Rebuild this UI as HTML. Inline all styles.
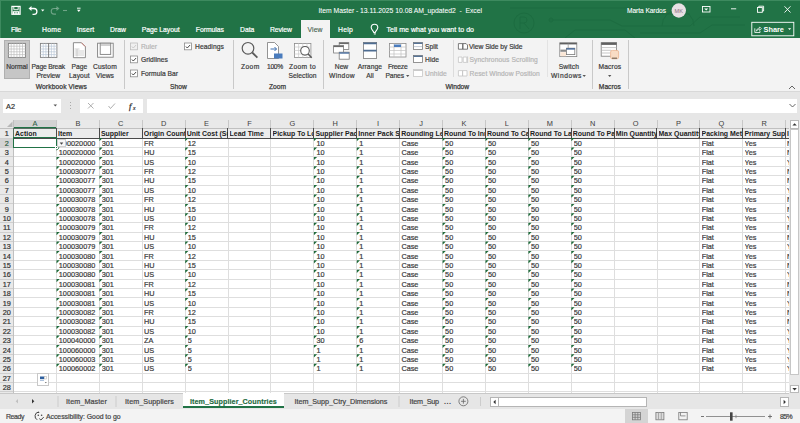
<!DOCTYPE html>
<html><head><meta charset="utf-8"><style>
html,body{margin:0;padding:0;width:800px;height:423px;overflow:hidden;background:#fff;}
body{position:relative;font-family:"Liberation Sans", sans-serif;}
div{box-sizing:border-box;}
svg{overflow:visible}
</style></head><body>
<div style="position:absolute;left:0px;top:0px;width:800px;height:38px;background:#217346"></div>
<div style="position:absolute;left:0px;top:0px;width:800px;height:1px;background:#3d8a5f"></div>
<div style="position:absolute;left:0px;top:0px;width:1px;height:38px;background:#3d8a5f"></div>
<svg style="position:absolute;left:0px;top:0px;" width="800" height="38" viewBox="0 0 800 38"><g fill="none" stroke="#1b6a3f" stroke-width="1" opacity="0.75">
<path d="M510 8 H640 L648 14 H690"/>
<circle cx="524" cy="23" r="10"/>
<path d="M520 17 v12 M520 17 h4 a3 3 0 0 1 0 6 h-4 M524 23 l5 6"/>
<path d="M549 20 H610 L622 26 H690 L700 17 H740"/>
<circle cx="551" cy="20" r="2"/>
<path d="M565 38 L575 30 H625 L635 38"/>
<path d="M640 33 H700 L712 25 H745"/>
<path d="M662 26 a16 16 0 0 1 32 0"/>
</g></svg>
<svg style="position:absolute;left:0px;top:0px;" width="100" height="20" viewBox="0 0 100 20">
<g fill="none" stroke="#fff" stroke-width="1.1">
<rect x="11.9" y="6.4" width="8.2" height="7.9" stroke-width="1.2"/>
<path d="M13.8 6.4 v3.3 h4.4 v-3.3" stroke-width="0.9"/>
<path d="M30.5 8.5 h3.5 a2.9 2.9 0 0 1 0 5.8 h-1.5" stroke-width="1.3"/>
</g>
<path d="M28.5 8.5 l3 -2.6 v5.2 z" fill="#fff"/><rect x="12.6" y="11.2" width="6.8" height="3" fill="#fff"/><rect x="14.2" y="12.3" width="1.2" height="1" fill="#217346"/><rect x="16.6" y="12.3" width="1.2" height="1" fill="#217346"/>
<path d="M41 9.5 h3.4 l-1.7 2 z" fill="#fff"/>
<g fill="none" stroke="#fff" stroke-width="1.1" opacity="0.35">
<path d="M57 8.5 h-3 a2.8 2.8 0 0 0 0 5.6 h2"/>
<path d="M63 10.5 h4"/>
</g>
<path d="M59.5 8.5 l-3 -2.6 v5.2 z" fill="#fff" opacity="0.35"/>
<path d="M77 8.2 h3.6" stroke="#fff" stroke-width="0.9"/>
<path d="M77 9.8 h3.6 l-1.8 2.2 z" fill="#fff"/>
</svg>
<svg style="position:absolute;left:660px;top:0px;" width="140" height="38" viewBox="0 0 140 38">
<circle cx="18.8" cy="10.5" r="7.2" fill="#e7e0e3"/>
<text x="18.8" y="12.6" font-family="Liberation Sans" font-size="5.6" fill="#8a6f7c" text-anchor="middle">MK</text>
<g fill="none" stroke="#fff" stroke-width="0.9">
<rect x="42.5" y="6.5" width="7.5" height="5.5"/>
<path d="M71 8.8 h5.2"/>
<rect x="97.5" y="7.5" width="4.8" height="4.8"/>
<path d="M98.8 7.5 v-1.3 h4.8 v4.8 h-1.3"/>
<path d="M124.5 6.3 l6 6.2 M130.5 6.3 l-6 6.2"/>
<rect x="91.8" y="22.3" width="42" height="13.5" />
<path d="M94.8 28.3 v4.2 h5.2 v-1.6" stroke-width="0.8"/><path d="M96.4 31.2 c0.2 -2 1.4 -3 3.2 -3 v-1.3 l1.8 1.8 l-1.8 1.8 v-1.2 c-1.4 0 -2.4 0.5 -3.2 1.9 z" stroke-width="0.7"/>
</g>
<path d="M44.2 8.5 h4 l-2 2 z" fill="#fff"/>
<path d="M128 28.2 h3.2 l-1.6 1.8 z" fill="#fff"/>
</svg>
<div style="position:absolute;left:300.6px;top:20.3px;width:29.6px;height:18px;background:#f3f3f3"></div>
<svg style="position:absolute;left:365px;top:20px;" width="20" height="18" viewBox="0 0 20 18"><g fill="none" stroke="#fff" stroke-width="1.1">
<path d="M8.8 12.5 c0 -1.6 -2.6 -2.6 -2.6 -5 a3.3 3.3 0 0 1 6.6 0 c0 2.4 -2.6 3.4 -2.6 5 z"/>
<path d="M8.8 13.9 h2"/></g></svg>
<div style="position:absolute;left:0px;top:38px;width:800px;height:53px;background:#f3f3f3"></div>
<div style="position:absolute;left:0px;top:90.6px;width:800px;height:0.9px;background:#d8d8d8"></div>
<div style="position:absolute;left:0px;top:91.5px;width:800px;height:28px;background:#e6e6e6"></div>
<div style="position:absolute;left:123.6px;top:40px;width:1px;height:48.5px;background:#c9c9c9"></div>
<div style="position:absolute;left:232.6px;top:40px;width:1px;height:48.5px;background:#c9c9c9"></div>
<div style="position:absolute;left:322.7px;top:40px;width:1px;height:48.5px;background:#c9c9c9"></div>
<div style="position:absolute;left:592.4px;top:40px;width:1px;height:48.5px;background:#c9c9c9"></div>
<div style="position:absolute;left:627.5px;top:40px;width:1px;height:48.5px;background:#c9c9c9"></div>
<div style="position:absolute;left:453.3px;top:40px;width:1px;height:37px;background:#dcdcdc"></div>
<div style="position:absolute;left:546.7px;top:40px;width:1px;height:37px;background:#e3e3e3"></div>
<div style="position:absolute;left:4px;top:39.5px;width:26px;height:39.5px;background:#c6c6c6;border:1px solid #b0b0b0"></div>
<svg style="position:absolute;left:0px;top:38px;" width="140" height="24" viewBox="0 0 140 24">
<g fill="none" stroke-width="0.7">
<rect x="8.4" y="5.4" width="17" height="14" fill="#fff" stroke="#808080" stroke-width="0.9"/>
<path d="M8.4 8.2 h17 M8.4 11 h17 M8.4 13.8 h17 M8.4 16.6 h17 M11.2 5.4 v14 M14 5.4 v14 M16.9 5.4 v14 M19.7 5.4 v14 M22.5 5.4 v14" stroke="#bdbdbd"/>
<rect x="40.4" y="5.4" width="16.5" height="14" fill="#fff" stroke="#808080" stroke-width="0.9"/>
<path d="M40.4 8.2 h16.5 M40.4 11 h16.5 M40.4 13.8 h16.5 M40.4 16.6 h16.5 M43.2 5.4 v14 M45.9 5.4 v14 M51.4 5.4 v14 M54.1 5.4 v14" stroke="#b9c6d6"/>
<path d="M48.6 5.4 v14" stroke="#707070" stroke-width="0.9"/>
<path d="M73.4 4.7 h8 l4 4 v11 h-12 z" fill="#fff" stroke="#808080" stroke-width="0.9"/>
<path d="M81.4 4.7 l4 4" stroke="#c97a70" stroke-width="0.9"/>
<path d="M74.5 11 h5 M74.5 13 h9.5 M74.5 15 h9.5 M74.5 17 h9.5 M77 11 v7.5" stroke="#bdbdbd"/>
<rect x="97.6" y="5.2" width="15.6" height="14" fill="#fff" stroke="#808080" stroke-width="0.9"/>
<rect x="100.2" y="5.2" width="10.5" height="11.2" fill="#fff" stroke="#808080" stroke-width="0.9"/>
<path d="M100.2 7 h10.5" stroke="#9a9a9a" stroke-width="0.9"/>
</g></svg>
<svg style="position:absolute;left:120px;top:38px;" width="120" height="45" viewBox="0 0 120 45">
<g fill="#fff" stroke-width="0.8">
<rect x="10.4" y="5" width="7" height="6.8" stroke="#bdbdbd" fill="#f0f0f0"/>
<rect x="10.4" y="18" width="7" height="6.8" stroke="#8a8a8a"/>
<rect x="10.4" y="32" width="7" height="6.8" stroke="#8a8a8a"/>
<rect x="64.4" y="5" width="7" height="6.8" stroke="#8a8a8a"/>
</g>
<g fill="none" stroke-width="0.9">
<path d="M11.9 8.5 l1.4 1.5 l2.8 -3" stroke="#c4c4c4"/>
<path d="M11.9 21.5 l1.4 1.5 l2.8 -3" stroke="#333"/>
<path d="M11.9 35.5 l1.4 1.5 l2.8 -3" stroke="#333"/>
<path d="M65.9 8.5 l1.4 1.5 l2.8 -3" stroke="#333"/>
</g></svg>
<svg style="position:absolute;left:230px;top:38px;" width="100" height="25" viewBox="0 0 100 25">
<g fill="none">
<circle cx="18" cy="10.3" r="5.8" stroke="#5a5a5a" stroke-width="1.2"/>
<path d="M22.2 14.5 l5.2 5.2" stroke="#5a5a5a" stroke-width="1.8"/>
<path d="M37.5 4.5 h7 l4 4 v12 h-11 z" fill="#fff" stroke="#7a7a7a" stroke-width="0.8"/>
<path d="M40.5 11 h6 M44.5 9 l2 2 l-2 2" stroke="#3d6fb0" stroke-width="1"/>
<rect x="44" y="15.5" width="8.5" height="5" fill="#4a7cbd"/>
<rect x="64.4" y="5.4" width="16.5" height="14" fill="#fff" stroke="#8a8a8a" stroke-width="0.8"/>
<path d="M64.4 9 h16.5 M64.4 12.5 h16.5 M64.4 16 h16.5 M68.6 5.4 v14 M72.8 5.4 v14 M77 5.4 v14" stroke="#c8c8c8" stroke-width="0.7"/>
<circle cx="75" cy="12.8" r="4.3" fill="#fff" stroke="#5a5a5a" stroke-width="1.1"/>
<path d="M78.1 15.9 l3.6 3.8" stroke="#5a5a5a" stroke-width="1.5"/>
</g></svg>
<svg style="position:absolute;left:325px;top:38px;" width="300" height="25" viewBox="0 0 300 25">
<g stroke-width="0.8">
<rect x="14.2" y="4.6" width="9.6" height="6.8" fill="#fff" stroke="#7a7a7a"/>
<path d="M14.2 5.4 h9.6" stroke="#6a6a6a" stroke-width="1.4"/>
<rect x="8.6" y="7.6" width="10" height="7.4" fill="#fff" stroke="#7a7a7a"/>
<path d="M8.6 8.4 h10" stroke="#6a6a6a" stroke-width="1.4"/>
<rect x="14.2" y="14.2" width="10" height="7" fill="#fff" stroke="#7a7a7a"/>
<path d="M14.2 15 h10" stroke="#4a6fa0" stroke-width="1.4"/>
<rect x="38.4" y="4.5" width="13.2" height="16" fill="#fff" stroke="#7a7a7a"/>
<path d="M38.4 5.4 h13.2 M38.4 12.6 h13.2" stroke="#4e6d92" stroke-width="1.9"/>
<rect x="64.5" y="5.5" width="16.5" height="13.5" fill="#fff" stroke="#8a8a8a"/>
<path d="M64.5 9 h16.5 M64.5 12.5 h16.5 M64.5 16 h16.5 M69 5.5 v13.5 M76 5.5 v13.5" stroke="#c0c0c0" stroke-width="0.7"/>
<rect x="69" y="6.5" width="7" height="2.5" fill="#4a7cbd"/>
<rect x="88.5" y="4.5" width="9" height="7" fill="#fff" stroke="#7a7a7a"/>
<path d="M88.5 5.3 h9" stroke="#4e6d92" stroke-width="1.3"/>
<path d="M88.5 8.6 h9" stroke="#9aa8ba" stroke-width="0.6"/>
<rect x="88.5" y="17.5" width="9" height="7" fill="#fff" stroke="#7a7a7a"/>
<path d="M88.5 18.3 h9" stroke="#4e6d92" stroke-width="1.3"/>
<rect x="88.5" y="31.5" width="9" height="7" fill="#fff" stroke="#c8c8c8"/>
<path d="M88.5 32.3 h9" stroke="#c8c8c8" stroke-width="1.3"/>
</g></svg>
<svg style="position:absolute;left:404px;top:73px;" width="8" height="6" viewBox="0 0 8 6"><path d="M2 2 h3.4 l-1.7 2 z" fill="#555"/></svg>
<svg style="position:absolute;left:455px;top:38px;" width="20" height="45" viewBox="0 0 20 45">
<g fill="#fff" stroke-width="0.8">
<path d="M3.4 5.6 h4.4 v5.6 h-4.4 z M7.8 5.6 h3.3 l1.4 1.4 v4.2 h-4.7 z" stroke="#5a5a5a"/>
<path d="M3.4 19 h3.6 v5.4 h-3.6 z M8.2 19 h3.6 v5.4 h-3.6 z" stroke="#c4c4c4"/>
<path d="M12.6 18.4 v6.6" stroke="#c4c4c4"/>
<path d="M3.4 32.6 h4.2 v5.4 h-4.2 z M7.6 32.6 h4.4 v5.4 h-4.4 z" stroke="#c4c4c4"/>
</g></svg>
<svg style="position:absolute;left:550px;top:38px;" width="80" height="25" viewBox="0 0 80 25">
<g stroke-width="0.8">
<rect x="9.8" y="4.8" width="17" height="13.8" fill="#fff" stroke="#808080"/>
<path d="M9.8 5.6 h17" stroke="#606060" stroke-width="1.6"/>
<path d="M18.2 5.6 v5" stroke="#9a9a9a"/>
<rect x="10.4" y="11.6" width="5.8" height="2.2" fill="#8a8a8a" stroke="none"/>
<rect x="10.4" y="14.2" width="5.8" height="4" fill="#fbe7d6" stroke="none"/>
<rect x="16.4" y="10.2" width="8.4" height="6.4" fill="#fff" stroke="#7a7a7a"/>
<path d="M16.4 10.9 h8.4" stroke="#3f6496" stroke-width="1.4"/>
<rect x="51.2" y="4.6" width="15.4" height="13.6" fill="#fff" stroke="#7a7a7a"/>
<path d="M51.2 5.8 h15.4" stroke="#606060" stroke-width="2.2"/>
<path d="M51.2 9.6 h15.4 M51.2 12.3 h10 M51.2 15 h9" stroke="#b0b0b0" stroke-width="0.7"/>
<rect x="60.6" y="12.4" width="8" height="8.4" rx="1.6" fill="#f9dcc4" stroke="#eab48f"/>
<rect x="62" y="19.6" width="5" height="1.2" fill="#7a6a5a" stroke="none"/>
</g></svg>
<svg style="position:absolute;left:581px;top:73px;" width="8" height="6" viewBox="0 0 8 6"><path d="M1.5 2 h3.4 l-1.7 2 z" fill="#555"/></svg>
<svg style="position:absolute;left:606px;top:73px;" width="8" height="6" viewBox="0 0 8 6"><path d="M2 2 h3.4 l-1.7 2 z" fill="#555"/></svg>
<svg style="position:absolute;left:786px;top:84px;" width="12" height="8" viewBox="0 0 12 8"><path d="M3 5 l3 -3 l3 3" fill="none" stroke="#555" stroke-width="0.9"/></svg>
<div style="position:absolute;left:3px;top:99px;width:58px;height:14px;background:#fff"></div>
<svg style="position:absolute;left:50px;top:100px;" width="10" height="10" viewBox="0 0 10 10"><path d="M3.5 4.5 h3.6 l-1.8 2 z" fill="#555"/></svg>
<svg style="position:absolute;left:68px;top:99px;" width="6" height="14" viewBox="0 0 6 14"><g fill="#aaa"><rect x="2" y="3" width="1" height="1"/><rect x="2" y="6" width="1" height="1"/><rect x="2" y="9" width="1" height="1"/></g></svg>
<div style="position:absolute;left:80px;top:99px;width:63px;height:14px;background:#fff"></div>
<svg style="position:absolute;left:80px;top:99px;" width="63" height="14" viewBox="0 0 63 14"><g fill="none" stroke="#9a9a9a" stroke-width="0.8">
<path d="M8 4 l5.5 5.5 M13.5 4 l-5.5 5.5"/>
<path d="M28.5 7 l2 2.5 l4.5 -5"/></g>
<text x="49" y="10.2" font-family="Liberation Serif" font-style="italic" font-size="8.5" fill="#333" stroke="#333" stroke-width="0.3">f</text>
<text x="53" y="10.8" font-family="Liberation Sans" font-style="italic" font-size="5" fill="#333" stroke="#333" stroke-width="0.2">x</text></svg>
<div style="position:absolute;left:147px;top:99px;width:650px;height:14px;background:#fff"></div>
<svg style="position:absolute;left:786px;top:100px;" width="12" height="12" viewBox="0 0 12 12"><path d="M3.5 4 l3 3 l3 -3" fill="none" stroke="#555" stroke-width="0.9"/></svg>
<div style="position:absolute;left:0px;top:119.5px;width:788.8px;height:273.5px;background:#fff"></div>
<div style="position:absolute;left:0px;top:119.5px;width:788.8px;height:8.5px;background:#e9e9e9"></div>
<div style="position:absolute;left:0px;top:128px;width:13.5px;height:265.0px;background:#e9e9e9"></div>
<div style="position:absolute;left:13.5px;top:119.5px;width:42.9px;height:8.5px;background:#d3d3d3"></div>
<div style="position:absolute;left:0px;top:138.0px;width:13.5px;height:9.4px;background:#d3d3d3"></div>
<div style="position:absolute;left:13.5px;top:128.0px;width:775.3px;height:10px;background:#ececec"></div>
<div style="position:absolute;left:55.9px;top:138.0px;width:1px;height:255.0px;background:#dedede"></div>
<div style="position:absolute;left:98.8px;top:138.0px;width:1px;height:255.0px;background:#dedede"></div>
<div style="position:absolute;left:141.7px;top:138.0px;width:1px;height:255.0px;background:#dedede"></div>
<div style="position:absolute;left:184.6px;top:138.0px;width:1px;height:255.0px;background:#dedede"></div>
<div style="position:absolute;left:227.5px;top:138.0px;width:1px;height:255.0px;background:#dedede"></div>
<div style="position:absolute;left:270.4px;top:138.0px;width:1px;height:255.0px;background:#dedede"></div>
<div style="position:absolute;left:313.3px;top:138.0px;width:1px;height:255.0px;background:#dedede"></div>
<div style="position:absolute;left:356.2px;top:138.0px;width:1px;height:255.0px;background:#dedede"></div>
<div style="position:absolute;left:399.09999999999997px;top:138.0px;width:1px;height:255.0px;background:#dedede"></div>
<div style="position:absolute;left:442.0px;top:138.0px;width:1px;height:255.0px;background:#dedede"></div>
<div style="position:absolute;left:484.9px;top:138.0px;width:1px;height:255.0px;background:#dedede"></div>
<div style="position:absolute;left:527.8px;top:138.0px;width:1px;height:255.0px;background:#dedede"></div>
<div style="position:absolute;left:570.6999999999999px;top:138.0px;width:1px;height:255.0px;background:#dedede"></div>
<div style="position:absolute;left:613.6px;top:138.0px;width:1px;height:255.0px;background:#dedede"></div>
<div style="position:absolute;left:656.5px;top:138.0px;width:1px;height:255.0px;background:#dedede"></div>
<div style="position:absolute;left:699.4px;top:138.0px;width:1px;height:255.0px;background:#dedede"></div>
<div style="position:absolute;left:742.3px;top:138.0px;width:1px;height:255.0px;background:#dedede"></div>
<div style="position:absolute;left:785.1999999999999px;top:138.0px;width:1px;height:255.0px;background:#dedede"></div>
<div style="position:absolute;left:13.5px;top:137.5px;width:775.3px;height:1px;background:#dedede"></div>
<div style="position:absolute;left:13.5px;top:146.9px;width:775.3px;height:1px;background:#dedede"></div>
<div style="position:absolute;left:13.5px;top:156.3px;width:775.3px;height:1px;background:#dedede"></div>
<div style="position:absolute;left:13.5px;top:165.7px;width:775.3px;height:1px;background:#dedede"></div>
<div style="position:absolute;left:13.5px;top:175.1px;width:775.3px;height:1px;background:#dedede"></div>
<div style="position:absolute;left:13.5px;top:184.5px;width:775.3px;height:1px;background:#dedede"></div>
<div style="position:absolute;left:13.5px;top:193.9px;width:775.3px;height:1px;background:#dedede"></div>
<div style="position:absolute;left:13.5px;top:203.3px;width:775.3px;height:1px;background:#dedede"></div>
<div style="position:absolute;left:13.5px;top:212.7px;width:775.3px;height:1px;background:#dedede"></div>
<div style="position:absolute;left:13.5px;top:222.10000000000002px;width:775.3px;height:1px;background:#dedede"></div>
<div style="position:absolute;left:13.5px;top:231.5px;width:775.3px;height:1px;background:#dedede"></div>
<div style="position:absolute;left:13.5px;top:240.9px;width:775.3px;height:1px;background:#dedede"></div>
<div style="position:absolute;left:13.5px;top:250.3px;width:775.3px;height:1px;background:#dedede"></div>
<div style="position:absolute;left:13.5px;top:259.7px;width:775.3px;height:1px;background:#dedede"></div>
<div style="position:absolute;left:13.5px;top:269.1px;width:775.3px;height:1px;background:#dedede"></div>
<div style="position:absolute;left:13.5px;top:278.5px;width:775.3px;height:1px;background:#dedede"></div>
<div style="position:absolute;left:13.5px;top:287.9px;width:775.3px;height:1px;background:#dedede"></div>
<div style="position:absolute;left:13.5px;top:297.3px;width:775.3px;height:1px;background:#dedede"></div>
<div style="position:absolute;left:13.5px;top:306.70000000000005px;width:775.3px;height:1px;background:#dedede"></div>
<div style="position:absolute;left:13.5px;top:316.1px;width:775.3px;height:1px;background:#dedede"></div>
<div style="position:absolute;left:13.5px;top:325.5px;width:775.3px;height:1px;background:#dedede"></div>
<div style="position:absolute;left:13.5px;top:334.9px;width:775.3px;height:1px;background:#dedede"></div>
<div style="position:absolute;left:13.5px;top:344.3px;width:775.3px;height:1px;background:#dedede"></div>
<div style="position:absolute;left:13.5px;top:353.70000000000005px;width:775.3px;height:1px;background:#dedede"></div>
<div style="position:absolute;left:13.5px;top:363.1px;width:775.3px;height:1px;background:#dedede"></div>
<div style="position:absolute;left:13.5px;top:372.5px;width:775.3px;height:1px;background:#dedede"></div>
<div style="position:absolute;left:13.5px;top:381.9px;width:775.3px;height:1px;background:#dedede"></div>
<div style="position:absolute;left:13.5px;top:391.3px;width:775.3px;height:1px;background:#dedede"></div>
<div style="position:absolute;left:13.0px;top:119.5px;width:1px;height:8.5px;background:#c8c8c8"></div>
<div style="position:absolute;left:55.9px;top:119.5px;width:1px;height:8.5px;background:#c8c8c8"></div>
<div style="position:absolute;left:98.8px;top:119.5px;width:1px;height:8.5px;background:#c8c8c8"></div>
<div style="position:absolute;left:141.7px;top:119.5px;width:1px;height:8.5px;background:#c8c8c8"></div>
<div style="position:absolute;left:184.6px;top:119.5px;width:1px;height:8.5px;background:#c8c8c8"></div>
<div style="position:absolute;left:227.5px;top:119.5px;width:1px;height:8.5px;background:#c8c8c8"></div>
<div style="position:absolute;left:270.4px;top:119.5px;width:1px;height:8.5px;background:#c8c8c8"></div>
<div style="position:absolute;left:313.3px;top:119.5px;width:1px;height:8.5px;background:#c8c8c8"></div>
<div style="position:absolute;left:356.2px;top:119.5px;width:1px;height:8.5px;background:#c8c8c8"></div>
<div style="position:absolute;left:399.09999999999997px;top:119.5px;width:1px;height:8.5px;background:#c8c8c8"></div>
<div style="position:absolute;left:442.0px;top:119.5px;width:1px;height:8.5px;background:#c8c8c8"></div>
<div style="position:absolute;left:484.9px;top:119.5px;width:1px;height:8.5px;background:#c8c8c8"></div>
<div style="position:absolute;left:527.8px;top:119.5px;width:1px;height:8.5px;background:#c8c8c8"></div>
<div style="position:absolute;left:570.6999999999999px;top:119.5px;width:1px;height:8.5px;background:#c8c8c8"></div>
<div style="position:absolute;left:613.6px;top:119.5px;width:1px;height:8.5px;background:#c8c8c8"></div>
<div style="position:absolute;left:656.5px;top:119.5px;width:1px;height:8.5px;background:#c8c8c8"></div>
<div style="position:absolute;left:699.4px;top:119.5px;width:1px;height:8.5px;background:#c8c8c8"></div>
<div style="position:absolute;left:742.3px;top:119.5px;width:1px;height:8.5px;background:#c8c8c8"></div>
<div style="position:absolute;left:785.1999999999999px;top:119.5px;width:1px;height:8.5px;background:#c8c8c8"></div>
<div style="position:absolute;left:0px;top:137.5px;width:13.5px;height:1px;background:#cfcfcf"></div>
<div style="position:absolute;left:0px;top:146.9px;width:13.5px;height:1px;background:#cfcfcf"></div>
<div style="position:absolute;left:0px;top:156.3px;width:13.5px;height:1px;background:#cfcfcf"></div>
<div style="position:absolute;left:0px;top:165.7px;width:13.5px;height:1px;background:#cfcfcf"></div>
<div style="position:absolute;left:0px;top:175.1px;width:13.5px;height:1px;background:#cfcfcf"></div>
<div style="position:absolute;left:0px;top:184.5px;width:13.5px;height:1px;background:#cfcfcf"></div>
<div style="position:absolute;left:0px;top:193.9px;width:13.5px;height:1px;background:#cfcfcf"></div>
<div style="position:absolute;left:0px;top:203.3px;width:13.5px;height:1px;background:#cfcfcf"></div>
<div style="position:absolute;left:0px;top:212.7px;width:13.5px;height:1px;background:#cfcfcf"></div>
<div style="position:absolute;left:0px;top:222.10000000000002px;width:13.5px;height:1px;background:#cfcfcf"></div>
<div style="position:absolute;left:0px;top:231.5px;width:13.5px;height:1px;background:#cfcfcf"></div>
<div style="position:absolute;left:0px;top:240.9px;width:13.5px;height:1px;background:#cfcfcf"></div>
<div style="position:absolute;left:0px;top:250.3px;width:13.5px;height:1px;background:#cfcfcf"></div>
<div style="position:absolute;left:0px;top:259.7px;width:13.5px;height:1px;background:#cfcfcf"></div>
<div style="position:absolute;left:0px;top:269.1px;width:13.5px;height:1px;background:#cfcfcf"></div>
<div style="position:absolute;left:0px;top:278.5px;width:13.5px;height:1px;background:#cfcfcf"></div>
<div style="position:absolute;left:0px;top:287.9px;width:13.5px;height:1px;background:#cfcfcf"></div>
<div style="position:absolute;left:0px;top:297.3px;width:13.5px;height:1px;background:#cfcfcf"></div>
<div style="position:absolute;left:0px;top:306.70000000000005px;width:13.5px;height:1px;background:#cfcfcf"></div>
<div style="position:absolute;left:0px;top:316.1px;width:13.5px;height:1px;background:#cfcfcf"></div>
<div style="position:absolute;left:0px;top:325.5px;width:13.5px;height:1px;background:#cfcfcf"></div>
<div style="position:absolute;left:0px;top:334.9px;width:13.5px;height:1px;background:#cfcfcf"></div>
<div style="position:absolute;left:0px;top:344.3px;width:13.5px;height:1px;background:#cfcfcf"></div>
<div style="position:absolute;left:0px;top:353.70000000000005px;width:13.5px;height:1px;background:#cfcfcf"></div>
<div style="position:absolute;left:0px;top:363.1px;width:13.5px;height:1px;background:#cfcfcf"></div>
<div style="position:absolute;left:0px;top:372.5px;width:13.5px;height:1px;background:#cfcfcf"></div>
<div style="position:absolute;left:0px;top:381.9px;width:13.5px;height:1px;background:#cfcfcf"></div>
<div style="position:absolute;left:0px;top:391.3px;width:13.5px;height:1px;background:#cfcfcf"></div>
<div style="position:absolute;left:0px;top:127.5px;width:788.8px;height:1px;background:#c0c0c0"></div>
<div style="position:absolute;left:13.0px;top:119.5px;width:1px;height:273.5px;background:#c0c0c0"></div>
<div style="position:absolute;left:13.5px;top:137.5px;width:775.3px;height:1px;background:#4a4a4a"></div>
<div style="position:absolute;left:55.8px;top:128.0px;width:1px;height:10px;background:#4a4a4a"></div>
<div style="position:absolute;left:98.7px;top:128.0px;width:1px;height:10px;background:#4a4a4a"></div>
<div style="position:absolute;left:141.6px;top:128.0px;width:1px;height:10px;background:#4a4a4a"></div>
<div style="position:absolute;left:184.5px;top:128.0px;width:1px;height:10px;background:#4a4a4a"></div>
<div style="position:absolute;left:227.4px;top:128.0px;width:1px;height:10px;background:#4a4a4a"></div>
<div style="position:absolute;left:270.29999999999995px;top:128.0px;width:1px;height:10px;background:#4a4a4a"></div>
<div style="position:absolute;left:313.2px;top:128.0px;width:1px;height:10px;background:#4a4a4a"></div>
<div style="position:absolute;left:356.09999999999997px;top:128.0px;width:1px;height:10px;background:#4a4a4a"></div>
<div style="position:absolute;left:398.99999999999994px;top:128.0px;width:1px;height:10px;background:#4a4a4a"></div>
<div style="position:absolute;left:441.9px;top:128.0px;width:1px;height:10px;background:#4a4a4a"></div>
<div style="position:absolute;left:484.79999999999995px;top:128.0px;width:1px;height:10px;background:#4a4a4a"></div>
<div style="position:absolute;left:527.6999999999999px;top:128.0px;width:1px;height:10px;background:#4a4a4a"></div>
<div style="position:absolute;left:570.5999999999999px;top:128.0px;width:1px;height:10px;background:#4a4a4a"></div>
<div style="position:absolute;left:613.5px;top:128.0px;width:1px;height:10px;background:#4a4a4a"></div>
<div style="position:absolute;left:656.4px;top:128.0px;width:1px;height:10px;background:#4a4a4a"></div>
<div style="position:absolute;left:699.3px;top:128.0px;width:1px;height:10px;background:#4a4a4a"></div>
<div style="position:absolute;left:742.1999999999999px;top:128.0px;width:1px;height:10px;background:#4a4a4a"></div>
<div style="position:absolute;left:785.0999999999999px;top:128.0px;width:1px;height:10px;background:#4a4a4a"></div>
<div style="position:absolute;left:13.3px;top:128.0px;width:1px;height:10px;background:#5a6e62"></div>
<div style="position:absolute;left:13.5px;top:127.7px;width:42.9px;height:1px;background:#5a6e62"></div>
<div style="position:absolute;left:13.5px;top:127.2px;width:42.9px;height:1.2px;background:#217346"></div>
<div style="position:absolute;left:12.5px;top:138.0px;width:1.2px;height:9.4px;background:#217346"></div>
<svg style="position:absolute;left:0px;top:119px;" width="14" height="10" viewBox="0 0 14 10"><path d="M12.5 2.5 v5.5 h-5.5 z" fill="#b8b8b8"/></svg>
<div style="position:absolute;left:788.8px;top:119.5px;width:11.200000000000045px;height:273.5px;background:#e9e9e9"></div>
<div style="position:absolute;left:790.2px;top:120.3px;width:8.4px;height:8.6px;background:#fff;border:1px solid #b9b9b9"></div>
<svg style="position:absolute;left:790px;top:120px;" width="10" height="10" viewBox="0 0 10 10"><path d="M2.4 5.6 h4.4 l-2.2 -2.4 z" fill="#333"/></svg>
<div style="position:absolute;left:790.2px;top:129.2px;width:8.4px;height:245.5px;background:#fff;border:1px solid #c6c6c6"></div>
<div style="position:absolute;left:790.2px;top:385.2px;width:8.4px;height:8px;background:#fff;border:1px solid #b9b9b9"></div>
<svg style="position:absolute;left:790px;top:385px;" width="10" height="10" viewBox="0 0 10 10"><path d="M2.4 3 h4.4 l-2.2 2.4 z" fill="#333"/></svg>
<svg style="position:absolute;left:0px;top:0px;z-index:5" width="800" height="423" viewBox="0 0 800 423"><path d="M99.40 138.10 h3.2 l-3.2 3.2 z M185.20 138.10 h3.2 l-3.2 3.2 z M313.90 138.10 h3.2 l-3.2 3.2 z M356.80 138.10 h3.2 l-3.2 3.2 z M442.60 138.10 h3.2 l-3.2 3.2 z M485.50 138.10 h3.2 l-3.2 3.2 z M528.40 138.10 h3.2 l-3.2 3.2 z M571.30 138.10 h3.2 l-3.2 3.2 z M56.50 147.50 h3.2 l-3.2 3.2 z M99.40 147.50 h3.2 l-3.2 3.2 z M185.20 147.50 h3.2 l-3.2 3.2 z M313.90 147.50 h3.2 l-3.2 3.2 z M356.80 147.50 h3.2 l-3.2 3.2 z M442.60 147.50 h3.2 l-3.2 3.2 z M485.50 147.50 h3.2 l-3.2 3.2 z M528.40 147.50 h3.2 l-3.2 3.2 z M571.30 147.50 h3.2 l-3.2 3.2 z M56.50 156.90 h3.2 l-3.2 3.2 z M99.40 156.90 h3.2 l-3.2 3.2 z M185.20 156.90 h3.2 l-3.2 3.2 z M313.90 156.90 h3.2 l-3.2 3.2 z M356.80 156.90 h3.2 l-3.2 3.2 z M442.60 156.90 h3.2 l-3.2 3.2 z M485.50 156.90 h3.2 l-3.2 3.2 z M528.40 156.90 h3.2 l-3.2 3.2 z M571.30 156.90 h3.2 l-3.2 3.2 z M56.50 166.30 h3.2 l-3.2 3.2 z M99.40 166.30 h3.2 l-3.2 3.2 z M185.20 166.30 h3.2 l-3.2 3.2 z M313.90 166.30 h3.2 l-3.2 3.2 z M356.80 166.30 h3.2 l-3.2 3.2 z M442.60 166.30 h3.2 l-3.2 3.2 z M485.50 166.30 h3.2 l-3.2 3.2 z M528.40 166.30 h3.2 l-3.2 3.2 z M571.30 166.30 h3.2 l-3.2 3.2 z M56.50 175.70 h3.2 l-3.2 3.2 z M99.40 175.70 h3.2 l-3.2 3.2 z M185.20 175.70 h3.2 l-3.2 3.2 z M313.90 175.70 h3.2 l-3.2 3.2 z M356.80 175.70 h3.2 l-3.2 3.2 z M442.60 175.70 h3.2 l-3.2 3.2 z M485.50 175.70 h3.2 l-3.2 3.2 z M528.40 175.70 h3.2 l-3.2 3.2 z M571.30 175.70 h3.2 l-3.2 3.2 z M56.50 185.10 h3.2 l-3.2 3.2 z M99.40 185.10 h3.2 l-3.2 3.2 z M185.20 185.10 h3.2 l-3.2 3.2 z M313.90 185.10 h3.2 l-3.2 3.2 z M356.80 185.10 h3.2 l-3.2 3.2 z M442.60 185.10 h3.2 l-3.2 3.2 z M485.50 185.10 h3.2 l-3.2 3.2 z M528.40 185.10 h3.2 l-3.2 3.2 z M571.30 185.10 h3.2 l-3.2 3.2 z M56.50 194.50 h3.2 l-3.2 3.2 z M99.40 194.50 h3.2 l-3.2 3.2 z M185.20 194.50 h3.2 l-3.2 3.2 z M313.90 194.50 h3.2 l-3.2 3.2 z M356.80 194.50 h3.2 l-3.2 3.2 z M442.60 194.50 h3.2 l-3.2 3.2 z M485.50 194.50 h3.2 l-3.2 3.2 z M528.40 194.50 h3.2 l-3.2 3.2 z M571.30 194.50 h3.2 l-3.2 3.2 z M56.50 203.90 h3.2 l-3.2 3.2 z M99.40 203.90 h3.2 l-3.2 3.2 z M185.20 203.90 h3.2 l-3.2 3.2 z M313.90 203.90 h3.2 l-3.2 3.2 z M356.80 203.90 h3.2 l-3.2 3.2 z M442.60 203.90 h3.2 l-3.2 3.2 z M485.50 203.90 h3.2 l-3.2 3.2 z M528.40 203.90 h3.2 l-3.2 3.2 z M571.30 203.90 h3.2 l-3.2 3.2 z M56.50 213.30 h3.2 l-3.2 3.2 z M99.40 213.30 h3.2 l-3.2 3.2 z M185.20 213.30 h3.2 l-3.2 3.2 z M313.90 213.30 h3.2 l-3.2 3.2 z M356.80 213.30 h3.2 l-3.2 3.2 z M442.60 213.30 h3.2 l-3.2 3.2 z M485.50 213.30 h3.2 l-3.2 3.2 z M528.40 213.30 h3.2 l-3.2 3.2 z M571.30 213.30 h3.2 l-3.2 3.2 z M56.50 222.70 h3.2 l-3.2 3.2 z M99.40 222.70 h3.2 l-3.2 3.2 z M185.20 222.70 h3.2 l-3.2 3.2 z M313.90 222.70 h3.2 l-3.2 3.2 z M356.80 222.70 h3.2 l-3.2 3.2 z M442.60 222.70 h3.2 l-3.2 3.2 z M485.50 222.70 h3.2 l-3.2 3.2 z M528.40 222.70 h3.2 l-3.2 3.2 z M571.30 222.70 h3.2 l-3.2 3.2 z M56.50 232.10 h3.2 l-3.2 3.2 z M99.40 232.10 h3.2 l-3.2 3.2 z M185.20 232.10 h3.2 l-3.2 3.2 z M313.90 232.10 h3.2 l-3.2 3.2 z M356.80 232.10 h3.2 l-3.2 3.2 z M442.60 232.10 h3.2 l-3.2 3.2 z M485.50 232.10 h3.2 l-3.2 3.2 z M528.40 232.10 h3.2 l-3.2 3.2 z M571.30 232.10 h3.2 l-3.2 3.2 z M56.50 241.50 h3.2 l-3.2 3.2 z M99.40 241.50 h3.2 l-3.2 3.2 z M185.20 241.50 h3.2 l-3.2 3.2 z M313.90 241.50 h3.2 l-3.2 3.2 z M356.80 241.50 h3.2 l-3.2 3.2 z M442.60 241.50 h3.2 l-3.2 3.2 z M485.50 241.50 h3.2 l-3.2 3.2 z M528.40 241.50 h3.2 l-3.2 3.2 z M571.30 241.50 h3.2 l-3.2 3.2 z M56.50 250.90 h3.2 l-3.2 3.2 z M99.40 250.90 h3.2 l-3.2 3.2 z M185.20 250.90 h3.2 l-3.2 3.2 z M313.90 250.90 h3.2 l-3.2 3.2 z M356.80 250.90 h3.2 l-3.2 3.2 z M442.60 250.90 h3.2 l-3.2 3.2 z M485.50 250.90 h3.2 l-3.2 3.2 z M528.40 250.90 h3.2 l-3.2 3.2 z M571.30 250.90 h3.2 l-3.2 3.2 z M56.50 260.30 h3.2 l-3.2 3.2 z M99.40 260.30 h3.2 l-3.2 3.2 z M185.20 260.30 h3.2 l-3.2 3.2 z M313.90 260.30 h3.2 l-3.2 3.2 z M356.80 260.30 h3.2 l-3.2 3.2 z M442.60 260.30 h3.2 l-3.2 3.2 z M485.50 260.30 h3.2 l-3.2 3.2 z M528.40 260.30 h3.2 l-3.2 3.2 z M571.30 260.30 h3.2 l-3.2 3.2 z M56.50 269.70 h3.2 l-3.2 3.2 z M99.40 269.70 h3.2 l-3.2 3.2 z M185.20 269.70 h3.2 l-3.2 3.2 z M313.90 269.70 h3.2 l-3.2 3.2 z M356.80 269.70 h3.2 l-3.2 3.2 z M442.60 269.70 h3.2 l-3.2 3.2 z M485.50 269.70 h3.2 l-3.2 3.2 z M528.40 269.70 h3.2 l-3.2 3.2 z M571.30 269.70 h3.2 l-3.2 3.2 z M56.50 279.10 h3.2 l-3.2 3.2 z M99.40 279.10 h3.2 l-3.2 3.2 z M185.20 279.10 h3.2 l-3.2 3.2 z M313.90 279.10 h3.2 l-3.2 3.2 z M356.80 279.10 h3.2 l-3.2 3.2 z M442.60 279.10 h3.2 l-3.2 3.2 z M485.50 279.10 h3.2 l-3.2 3.2 z M528.40 279.10 h3.2 l-3.2 3.2 z M571.30 279.10 h3.2 l-3.2 3.2 z M56.50 288.50 h3.2 l-3.2 3.2 z M99.40 288.50 h3.2 l-3.2 3.2 z M185.20 288.50 h3.2 l-3.2 3.2 z M313.90 288.50 h3.2 l-3.2 3.2 z M356.80 288.50 h3.2 l-3.2 3.2 z M442.60 288.50 h3.2 l-3.2 3.2 z M485.50 288.50 h3.2 l-3.2 3.2 z M528.40 288.50 h3.2 l-3.2 3.2 z M571.30 288.50 h3.2 l-3.2 3.2 z M56.50 297.90 h3.2 l-3.2 3.2 z M99.40 297.90 h3.2 l-3.2 3.2 z M185.20 297.90 h3.2 l-3.2 3.2 z M313.90 297.90 h3.2 l-3.2 3.2 z M356.80 297.90 h3.2 l-3.2 3.2 z M442.60 297.90 h3.2 l-3.2 3.2 z M485.50 297.90 h3.2 l-3.2 3.2 z M528.40 297.90 h3.2 l-3.2 3.2 z M571.30 297.90 h3.2 l-3.2 3.2 z M56.50 307.30 h3.2 l-3.2 3.2 z M99.40 307.30 h3.2 l-3.2 3.2 z M185.20 307.30 h3.2 l-3.2 3.2 z M313.90 307.30 h3.2 l-3.2 3.2 z M356.80 307.30 h3.2 l-3.2 3.2 z M442.60 307.30 h3.2 l-3.2 3.2 z M485.50 307.30 h3.2 l-3.2 3.2 z M528.40 307.30 h3.2 l-3.2 3.2 z M571.30 307.30 h3.2 l-3.2 3.2 z M56.50 316.70 h3.2 l-3.2 3.2 z M99.40 316.70 h3.2 l-3.2 3.2 z M185.20 316.70 h3.2 l-3.2 3.2 z M313.90 316.70 h3.2 l-3.2 3.2 z M356.80 316.70 h3.2 l-3.2 3.2 z M442.60 316.70 h3.2 l-3.2 3.2 z M485.50 316.70 h3.2 l-3.2 3.2 z M528.40 316.70 h3.2 l-3.2 3.2 z M571.30 316.70 h3.2 l-3.2 3.2 z M56.50 326.10 h3.2 l-3.2 3.2 z M99.40 326.10 h3.2 l-3.2 3.2 z M185.20 326.10 h3.2 l-3.2 3.2 z M313.90 326.10 h3.2 l-3.2 3.2 z M356.80 326.10 h3.2 l-3.2 3.2 z M442.60 326.10 h3.2 l-3.2 3.2 z M485.50 326.10 h3.2 l-3.2 3.2 z M528.40 326.10 h3.2 l-3.2 3.2 z M571.30 326.10 h3.2 l-3.2 3.2 z M56.50 335.50 h3.2 l-3.2 3.2 z M99.40 335.50 h3.2 l-3.2 3.2 z M185.20 335.50 h3.2 l-3.2 3.2 z M313.90 335.50 h3.2 l-3.2 3.2 z M356.80 335.50 h3.2 l-3.2 3.2 z M442.60 335.50 h3.2 l-3.2 3.2 z M485.50 335.50 h3.2 l-3.2 3.2 z M528.40 335.50 h3.2 l-3.2 3.2 z M571.30 335.50 h3.2 l-3.2 3.2 z M56.50 344.90 h3.2 l-3.2 3.2 z M99.40 344.90 h3.2 l-3.2 3.2 z M185.20 344.90 h3.2 l-3.2 3.2 z M313.90 344.90 h3.2 l-3.2 3.2 z M356.80 344.90 h3.2 l-3.2 3.2 z M442.60 344.90 h3.2 l-3.2 3.2 z M485.50 344.90 h3.2 l-3.2 3.2 z M528.40 344.90 h3.2 l-3.2 3.2 z M571.30 344.90 h3.2 l-3.2 3.2 z M56.50 354.30 h3.2 l-3.2 3.2 z M99.40 354.30 h3.2 l-3.2 3.2 z M185.20 354.30 h3.2 l-3.2 3.2 z M313.90 354.30 h3.2 l-3.2 3.2 z M356.80 354.30 h3.2 l-3.2 3.2 z M442.60 354.30 h3.2 l-3.2 3.2 z M485.50 354.30 h3.2 l-3.2 3.2 z M528.40 354.30 h3.2 l-3.2 3.2 z M571.30 354.30 h3.2 l-3.2 3.2 z M56.50 363.70 h3.2 l-3.2 3.2 z M99.40 363.70 h3.2 l-3.2 3.2 z M185.20 363.70 h3.2 l-3.2 3.2 z M313.90 363.70 h3.2 l-3.2 3.2 z M356.80 363.70 h3.2 l-3.2 3.2 z M442.60 363.70 h3.2 l-3.2 3.2 z M485.50 363.70 h3.2 l-3.2 3.2 z M528.40 363.70 h3.2 l-3.2 3.2 z M571.30 363.70 h3.2 l-3.2 3.2 z" fill="#1f6b3a"/></svg>
<div style="position:absolute;left:12.90px;top:137.20px;width:44.10px;height:11.00px;border:1.5px solid #217346;z-index:6"></div>
<div style="position:absolute;left:54.80px;top:145.80px;width:3px;height:3px;background:#217346;border:0.5px solid #fff;z-index:7"></div>
<div style="position:absolute;left:57.20px;top:138.60px;width:9px;height:8.6px;background:#f7f7f7;border:0.8px solid #cfcfcf;z-index:8"></div>
<svg style="position:absolute;left:57.20px;top:138.60px;z-index:9" width="9" height="9"><path d="M2.7 3.6 h3.6 l-1.8 2.1 z" fill="#444"/></svg>
<div style="position:absolute;left:37.4px;top:373px;width:12px;height:12.6px;background:#fff;border:0.8px solid #c8c8c8;z-index:8"></div>
<svg style="position:absolute;left:37.4px;top:373px;z-index:9" width="12" height="13" viewBox="0 0 12 13"><rect x="3" y="3.5" width="4" height="2.5" fill="#2e5f9e"/><rect x="3" y="6.6" width="4" height="1.2" fill="#9db6d6"/><rect x="7.3" y="3.5" width="2" height="2.5" fill="none" stroke="#aaa" stroke-width="0.5"/><path d="M7.8 9 h2 l-1 1.2 z" fill="#666"/></svg>
<div style="position:absolute;left:0px;top:393px;width:800px;height:16px;background:#e6e6e6"></div>
<div style="position:absolute;left:0px;top:393px;width:789px;height:0.8px;background:#c8c8c8"></div>
<svg style="position:absolute;left:0px;top:393px;" width="800" height="16" viewBox="0 0 800 16">
<path d="M18 6 v4.5 l-2.3 -2.25 z" fill="#c0c0c0"/>
<path d="M32 6 v4.5 l2.3 -2.25 z" fill="#333"/>
<g fill="#c6c6c6"><rect x="57.6" y="3" width="0.8" height="11"/><rect x="115.6" y="3" width="0.8" height="11"/><rect x="398.6" y="3" width="0.8" height="11"/><rect x="480.1" y="4" width="0.8" height="9"/></g>
<circle cx="463.4" cy="8.3" r="4.5" fill="none" stroke="#666" stroke-width="0.8"/>
<path d="M461 8.3 h4.8 M463.4 5.9 v4.8" stroke="#666" stroke-width="0.8"/>
</svg>
<div style="position:absolute;left:183px;top:393px;width:100.6px;height:15px;background:#ffffff"></div>
<div style="position:absolute;left:183px;top:406.3px;width:100.6px;height:1.4px;background:#217346"></div>
<div style="position:absolute;left:489.5px;top:396.5px;width:157.5px;height:10px;background:#fff;border:0.8px solid #b5b5b5"></div>
<div style="position:absolute;left:489.5px;top:396.5px;width:9.3px;height:10px;border:0.8px solid #b5b5b5"></div>
<svg style="position:absolute;left:489.5px;top:396.5px;" width="10" height="10" viewBox="0 0 10 10"><path d="M5.6 2.8 v4.4 l-2.3 -2.2 z" fill="#333"/></svg>
<div style="position:absolute;left:780px;top:396.5px;width:9px;height:10px;background:#fff;border:0.8px solid #b5b5b5"></div>
<svg style="position:absolute;left:780px;top:396.5px;" width="10" height="10" viewBox="0 0 10 10"><path d="M3.6 2.8 v4.4 l2.3 -2.2 z" fill="#333"/></svg>
<div style="position:absolute;left:0px;top:409px;width:800px;height:14px;background:#f3f3f3"></div>
<svg style="position:absolute;left:32px;top:409px;" width="16" height="14" viewBox="0 0 16 14"><g fill="none" stroke="#444" stroke-width="1">
<path d="M6.5 3 A4.2 4.2 0 0 0 5.2 10.8"/>
<path d="M7.3 9.6 l1.6 1.4 l2.8 -2.9"/>
</g><circle cx="6.3" cy="6.3" r="0.8" fill="#444"/><circle cx="9.6" cy="6.3" r="0.8" fill="#444"/><circle cx="6.6" cy="3.4" r="0.7" fill="#444"/></svg>
<div style="position:absolute;left:625px;top:409px;width:22.5px;height:14px;background:#d4d4d4"></div>
<svg style="position:absolute;left:620px;top:409px;" width="180" height="14" viewBox="0 0 180 14">
<g fill="none" stroke="#7a7a7a" stroke-width="0.8">
<rect x="12.4" y="3.4" width="8" height="7.4"/>
<path d="M12.4 5.8 h8 M12.4 8.3 h8 M15.1 3.4 v7.4 M17.8 3.4 v7.4"/>
<rect x="35.9" y="3.4" width="8" height="7.4" fill="#dcdcdc"/><path d="M38.5 3.4 v7.4 M41.3 3.4 v7.4" stroke="#9a9a9a"/>
<rect x="58.8" y="3.4" width="8.4" height="7.4"/><path d="M60.5 3.4 v3.5 h5"/>
</g>
<path d="M81 7.5 h3" stroke="#666" stroke-width="0.9"/>
<path d="M86 7.5 h59" stroke="#777" stroke-width="0.8"/>
<rect x="110" y="3.3" width="2.6" height="8.4" fill="#444"/><path d="M116 5.8 v3.4" stroke="#777" stroke-width="0.7"/>
<path d="M148 7.5 h4 M150 5.5 v4" stroke="#666" stroke-width="0.9"/>
</svg>
<div style="position:absolute;left:318.50px;top:4.80px;height:12px;line-height:12px;font-size:6.8px;font-weight:normal;color:#ffffff;letter-spacing:-0.023px;white-space:pre;-webkit-text-stroke:0.05px #ffffff;">Item Master - 13.11.2025 10.08 AM_updated2  -  Excel</div>
<div style="position:absolute;left:627.00px;top:4.60px;height:12px;line-height:12px;font-size:6.6px;font-weight:normal;color:#ffffff;letter-spacing:-0.051px;white-space:pre;-webkit-text-stroke:0.1px #ffffff;">Marta Kardos</div>
<div style="position:absolute;left:763.60px;top:23.60px;height:12px;line-height:12px;font-size:7.4px;font-weight:bold;color:#ffffff;letter-spacing:-0.053px;white-space:pre;">Share</div>
<div style="position:absolute;left:11.00px;top:23.60px;height:12px;line-height:12px;font-size:6.8px;font-weight:normal;color:#ffffff;letter-spacing:-0.239px;white-space:pre;-webkit-text-stroke:0.2px #ffffff;">File</div>
<div style="position:absolute;left:42.00px;top:23.60px;height:12px;line-height:12px;font-size:6.8px;font-weight:normal;color:#ffffff;letter-spacing:0.315px;white-space:pre;-webkit-text-stroke:0.2px #ffffff;">Home</div>
<div style="position:absolute;left:76.70px;top:23.60px;height:12px;line-height:12px;font-size:6.8px;font-weight:normal;color:#ffffff;letter-spacing:0.099px;white-space:pre;-webkit-text-stroke:0.2px #ffffff;">Insert</div>
<div style="position:absolute;left:110.00px;top:23.60px;height:12px;line-height:12px;font-size:6.8px;font-weight:normal;color:#ffffff;letter-spacing:0.033px;white-space:pre;-webkit-text-stroke:0.2px #ffffff;">Draw</div>
<div style="position:absolute;left:141.70px;top:23.60px;height:12px;line-height:12px;font-size:6.8px;font-weight:normal;color:#ffffff;letter-spacing:-0.026px;white-space:pre;-webkit-text-stroke:0.2px #ffffff;">Page Layout</div>
<div style="position:absolute;left:195.80px;top:23.60px;height:12px;line-height:12px;font-size:6.8px;font-weight:normal;color:#ffffff;letter-spacing:-0.017px;white-space:pre;-webkit-text-stroke:0.2px #ffffff;">Formulas</div>
<div style="position:absolute;left:240.00px;top:23.60px;height:12px;line-height:12px;font-size:6.8px;font-weight:normal;color:#ffffff;letter-spacing:0.009px;white-space:pre;-webkit-text-stroke:0.2px #ffffff;">Data</div>
<div style="position:absolute;left:270.00px;top:23.60px;height:12px;line-height:12px;font-size:6.8px;font-weight:normal;color:#ffffff;letter-spacing:-0.099px;white-space:pre;-webkit-text-stroke:0.2px #ffffff;">Review</div>
<div style="position:absolute;left:338.00px;top:23.60px;height:12px;line-height:12px;font-size:6.8px;font-weight:normal;color:#ffffff;letter-spacing:0.254px;white-space:pre;-webkit-text-stroke:0.2px #ffffff;">Help</div>
<div style="position:absolute;left:307.50px;top:23.50px;height:12px;line-height:12px;font-size:6.8px;font-weight:normal;color:#3f5a4a;letter-spacing:0.121px;white-space:pre;-webkit-text-stroke:0.1px #3f5a4a;">View</div>
<div style="position:absolute;left:386.50px;top:23.60px;height:12px;line-height:12px;font-size:7.0px;font-weight:normal;color:#ffffff;letter-spacing:0.042px;white-space:pre;-webkit-text-stroke:0.2px #ffffff;">Tell me what you want to do</div>
<div style="position:absolute;left:6.20px;top:60.90px;height:12px;line-height:12px;font-size:6.7px;font-weight:normal;color:#3b3b3b;letter-spacing:0.000px;white-space:pre;-webkit-text-stroke:0.2px #3b3b3b;">Normal</div>
<div style="position:absolute;left:31.50px;top:60.90px;height:12px;line-height:12px;font-size:6.7px;font-weight:normal;color:#3b3b3b;letter-spacing:-0.151px;white-space:pre;-webkit-text-stroke:0.2px #3b3b3b;">Page Break</div>
<div style="position:absolute;left:36.38px;top:70.40px;height:12px;line-height:12px;font-size:6.7px;font-weight:normal;color:#3b3b3b;letter-spacing:0.000px;white-space:pre;-webkit-text-stroke:0.2px #3b3b3b;">Preview</div>
<div style="position:absolute;left:71.58px;top:60.90px;height:12px;line-height:12px;font-size:6.7px;font-weight:normal;color:#3b3b3b;letter-spacing:0.000px;white-space:pre;-webkit-text-stroke:0.2px #3b3b3b;">Page</div>
<div style="position:absolute;left:69.00px;top:70.40px;height:12px;line-height:12px;font-size:6.7px;font-weight:normal;color:#3b3b3b;letter-spacing:0.097px;white-space:pre;-webkit-text-stroke:0.2px #3b3b3b;">Layout</div>
<div style="position:absolute;left:93.00px;top:60.90px;height:12px;line-height:12px;font-size:6.7px;font-weight:normal;color:#3b3b3b;letter-spacing:0.153px;white-space:pre;-webkit-text-stroke:0.2px #3b3b3b;">Custom</div>
<div style="position:absolute;left:96.12px;top:70.40px;height:12px;line-height:12px;font-size:6.7px;font-weight:normal;color:#3b3b3b;letter-spacing:0.000px;white-space:pre;-webkit-text-stroke:0.2px #3b3b3b;">Views</div>
<div style="position:absolute;left:35.70px;top:81.20px;height:12px;line-height:12px;font-size:6.7px;font-weight:normal;color:#3a3a3a;letter-spacing:0.118px;white-space:pre;-webkit-text-stroke:0.25px #3a3a3a;">Workbook Views</div>
<div style="position:absolute;left:141.00px;top:40.50px;height:12px;line-height:12px;font-size:6.7px;font-weight:normal;color:#b5b5b5;letter-spacing:-0.002px;white-space:pre;-webkit-text-stroke:0.2px #b5b5b5;">Ruler</div>
<div style="position:absolute;left:141.00px;top:53.80px;height:12px;line-height:12px;font-size:6.7px;font-weight:normal;color:#3b3b3b;letter-spacing:0.062px;white-space:pre;-webkit-text-stroke:0.2px #3b3b3b;">Gridlines</div>
<div style="position:absolute;left:141.00px;top:68.00px;height:12px;line-height:12px;font-size:6.7px;font-weight:normal;color:#3b3b3b;letter-spacing:0.013px;white-space:pre;-webkit-text-stroke:0.2px #3b3b3b;">Formula Bar</div>
<div style="position:absolute;left:195.00px;top:40.50px;height:12px;line-height:12px;font-size:6.7px;font-weight:normal;color:#3b3b3b;letter-spacing:0.086px;white-space:pre;-webkit-text-stroke:0.2px #3b3b3b;">Headings</div>
<div style="position:absolute;left:170.12px;top:81.20px;height:12px;line-height:12px;font-size:6.7px;font-weight:normal;color:#3a3a3a;letter-spacing:0.000px;white-space:pre;-webkit-text-stroke:0.25px #3a3a3a;">Show</div>
<div style="position:absolute;left:241.00px;top:60.90px;height:12px;line-height:12px;font-size:6.7px;font-weight:normal;color:#3b3b3b;letter-spacing:0.393px;white-space:pre;-webkit-text-stroke:0.2px #3b3b3b;">Zoom</div>
<div style="position:absolute;left:267.00px;top:60.90px;height:12px;line-height:12px;font-size:6.7px;font-weight:normal;color:#3b3b3b;letter-spacing:-0.284px;white-space:pre;-webkit-text-stroke:0.2px #3b3b3b;">100%</div>
<div style="position:absolute;left:289.00px;top:60.90px;height:12px;line-height:12px;font-size:6.7px;font-weight:normal;color:#3b3b3b;letter-spacing:0.346px;white-space:pre;-webkit-text-stroke:0.2px #3b3b3b;">Zoom to</div>
<div style="position:absolute;left:288.50px;top:70.40px;height:12px;line-height:12px;font-size:6.7px;font-weight:normal;color:#3b3b3b;letter-spacing:0.049px;white-space:pre;-webkit-text-stroke:0.2px #3b3b3b;">Selection</div>
<div style="position:absolute;left:268.94px;top:81.20px;height:12px;line-height:12px;font-size:6.7px;font-weight:normal;color:#3a3a3a;letter-spacing:0.000px;white-space:pre;-webkit-text-stroke:0.25px #3a3a3a;">Zoom</div>
<div style="position:absolute;left:334.80px;top:60.90px;height:12px;line-height:12px;font-size:6.7px;font-weight:normal;color:#3b3b3b;letter-spacing:0.000px;white-space:pre;-webkit-text-stroke:0.2px #3b3b3b;">New</div>
<div style="position:absolute;left:329.00px;top:70.40px;height:12px;line-height:12px;font-size:6.7px;font-weight:normal;color:#3b3b3b;letter-spacing:0.362px;white-space:pre;-webkit-text-stroke:0.2px #3b3b3b;">Window</div>
<div style="position:absolute;left:357.80px;top:60.90px;height:12px;line-height:12px;font-size:6.7px;font-weight:normal;color:#3b3b3b;letter-spacing:0.052px;white-space:pre;-webkit-text-stroke:0.2px #3b3b3b;">Arrange</div>
<div style="position:absolute;left:366.28px;top:70.40px;height:12px;line-height:12px;font-size:6.7px;font-weight:normal;color:#3b3b3b;letter-spacing:0.000px;white-space:pre;-webkit-text-stroke:0.2px #3b3b3b;">All</div>
<div style="position:absolute;left:388.00px;top:60.90px;height:12px;line-height:12px;font-size:6.7px;font-weight:normal;color:#3b3b3b;letter-spacing:-0.225px;white-space:pre;-webkit-text-stroke:0.2px #3b3b3b;">Freeze</div>
<div style="position:absolute;left:385.50px;top:70.40px;height:12px;line-height:12px;font-size:6.7px;font-weight:normal;color:#3b3b3b;letter-spacing:-0.100px;white-space:pre;-webkit-text-stroke:0.2px #3b3b3b;">Panes</div>
<div style="position:absolute;left:425.00px;top:40.50px;height:12px;line-height:12px;font-size:6.7px;font-weight:normal;color:#3b3b3b;letter-spacing:-0.007px;white-space:pre;-webkit-text-stroke:0.2px #3b3b3b;">Split</div>
<div style="position:absolute;left:425.00px;top:53.80px;height:12px;line-height:12px;font-size:6.7px;font-weight:normal;color:#3b3b3b;letter-spacing:0.055px;white-space:pre;-webkit-text-stroke:0.2px #3b3b3b;">Hide</div>
<div style="position:absolute;left:425.00px;top:68.00px;height:12px;line-height:12px;font-size:6.7px;font-weight:normal;color:#b5b5b5;letter-spacing:0.128px;white-space:pre;-webkit-text-stroke:0.2px #b5b5b5;">Unhide</div>
<div style="position:absolute;left:469.00px;top:40.50px;height:12px;line-height:12px;font-size:6.7px;font-weight:normal;color:#3b3b3b;letter-spacing:-0.017px;white-space:pre;-webkit-text-stroke:0.2px #3b3b3b;">View Side by Side</div>
<div style="position:absolute;left:469.50px;top:53.80px;height:12px;line-height:12px;font-size:6.7px;font-weight:normal;color:#b5b5b5;letter-spacing:0.087px;white-space:pre;-webkit-text-stroke:0.2px #b5b5b5;">Synchronous Scrolling</div>
<div style="position:absolute;left:469.50px;top:68.00px;height:12px;line-height:12px;font-size:6.7px;font-weight:normal;color:#b5b5b5;letter-spacing:0.077px;white-space:pre;-webkit-text-stroke:0.2px #b5b5b5;">Reset Window Position</div>
<div style="position:absolute;left:445.38px;top:81.20px;height:12px;line-height:12px;font-size:6.7px;font-weight:normal;color:#3a3a3a;letter-spacing:0.000px;white-space:pre;-webkit-text-stroke:0.25px #3a3a3a;">Window</div>
<div style="position:absolute;left:558.70px;top:60.90px;height:12px;line-height:12px;font-size:6.7px;font-weight:normal;color:#3b3b3b;letter-spacing:0.094px;white-space:pre;-webkit-text-stroke:0.2px #3b3b3b;">Switch</div>
<div style="position:absolute;left:551.00px;top:70.40px;height:12px;line-height:12px;font-size:6.7px;font-weight:normal;color:#3b3b3b;letter-spacing:0.546px;white-space:pre;-webkit-text-stroke:0.2px #3b3b3b;">Windows</div>
<div style="position:absolute;left:598.50px;top:60.90px;height:12px;line-height:12px;font-size:6.7px;font-weight:normal;color:#3b3b3b;letter-spacing:0.139px;white-space:pre;-webkit-text-stroke:0.2px #3b3b3b;">Macros</div>
<div style="position:absolute;left:598.82px;top:81.20px;height:12px;line-height:12px;font-size:6.7px;font-weight:normal;color:#3a3a3a;letter-spacing:0.000px;white-space:pre;-webkit-text-stroke:0.25px #3a3a3a;">Macros</div>
<div style="position:absolute;left:6.00px;top:101.00px;height:12px;line-height:12px;font-size:7.3px;font-weight:normal;color:#333;letter-spacing:0.035px;white-space:pre;-webkit-text-stroke:0.2px #333;">A2</div>
<div style="position:absolute;left:32.48px;top:118.00px;height:12px;line-height:12px;font-size:7.4px;font-weight:normal;color:#2f5d43;letter-spacing:0.000px;white-space:pre;-webkit-text-stroke:0.05px #2f5d43;">A</div>
<div style="position:absolute;left:75.38px;top:118.00px;height:12px;line-height:12px;font-size:7.4px;font-weight:normal;color:#444;letter-spacing:0.000px;white-space:pre;-webkit-text-stroke:0.05px #444;">B</div>
<div style="position:absolute;left:118.08px;top:118.00px;height:12px;line-height:12px;font-size:7.4px;font-weight:normal;color:#444;letter-spacing:0.000px;white-space:pre;-webkit-text-stroke:0.05px #444;">C</div>
<div style="position:absolute;left:160.98px;top:118.00px;height:12px;line-height:12px;font-size:7.4px;font-weight:normal;color:#444;letter-spacing:0.000px;white-space:pre;-webkit-text-stroke:0.05px #444;">D</div>
<div style="position:absolute;left:204.08px;top:118.00px;height:12px;line-height:12px;font-size:7.4px;font-weight:normal;color:#444;letter-spacing:0.000px;white-space:pre;-webkit-text-stroke:0.05px #444;">E</div>
<div style="position:absolute;left:247.19px;top:118.00px;height:12px;line-height:12px;font-size:7.4px;font-weight:normal;color:#444;letter-spacing:0.000px;white-space:pre;-webkit-text-stroke:0.05px #444;">F</div>
<div style="position:absolute;left:289.47px;top:118.00px;height:12px;line-height:12px;font-size:7.4px;font-weight:normal;color:#444;letter-spacing:0.000px;white-space:pre;-webkit-text-stroke:0.05px #444;">G</div>
<div style="position:absolute;left:332.58px;top:118.00px;height:12px;line-height:12px;font-size:7.4px;font-weight:normal;color:#444;letter-spacing:0.000px;white-space:pre;-webkit-text-stroke:0.05px #444;">H</div>
<div style="position:absolute;left:377.12px;top:118.00px;height:12px;line-height:12px;font-size:7.4px;font-weight:normal;color:#444;letter-spacing:0.000px;white-space:pre;-webkit-text-stroke:0.05px #444;">I</div>
<div style="position:absolute;left:419.20px;top:118.00px;height:12px;line-height:12px;font-size:7.4px;font-weight:normal;color:#444;letter-spacing:0.000px;white-space:pre;-webkit-text-stroke:0.05px #444;">J</div>
<div style="position:absolute;left:461.48px;top:118.00px;height:12px;line-height:12px;font-size:7.4px;font-weight:normal;color:#444;letter-spacing:0.000px;white-space:pre;-webkit-text-stroke:0.05px #444;">K</div>
<div style="position:absolute;left:504.79px;top:118.00px;height:12px;line-height:12px;font-size:7.4px;font-weight:normal;color:#444;letter-spacing:0.000px;white-space:pre;-webkit-text-stroke:0.05px #444;">L</div>
<div style="position:absolute;left:546.67px;top:118.00px;height:12px;line-height:12px;font-size:7.4px;font-weight:normal;color:#444;letter-spacing:0.000px;white-space:pre;-webkit-text-stroke:0.05px #444;">M</div>
<div style="position:absolute;left:589.98px;top:118.00px;height:12px;line-height:12px;font-size:7.4px;font-weight:normal;color:#444;letter-spacing:0.000px;white-space:pre;-webkit-text-stroke:0.05px #444;">N</div>
<div style="position:absolute;left:632.67px;top:118.00px;height:12px;line-height:12px;font-size:7.4px;font-weight:normal;color:#444;letter-spacing:0.000px;white-space:pre;-webkit-text-stroke:0.05px #444;">O</div>
<div style="position:absolute;left:675.98px;top:118.00px;height:12px;line-height:12px;font-size:7.4px;font-weight:normal;color:#444;letter-spacing:0.000px;white-space:pre;-webkit-text-stroke:0.05px #444;">P</div>
<div style="position:absolute;left:718.47px;top:118.00px;height:12px;line-height:12px;font-size:7.4px;font-weight:normal;color:#444;letter-spacing:0.000px;white-space:pre;-webkit-text-stroke:0.05px #444;">Q</div>
<div style="position:absolute;left:761.58px;top:118.00px;height:12px;line-height:12px;font-size:7.4px;font-weight:normal;color:#444;letter-spacing:0.000px;white-space:pre;-webkit-text-stroke:0.05px #444;">R</div>
<div style="position:absolute;left:804.68px;top:117.80px;height:12px;line-height:12px;font-size:7.4px;font-weight:normal;color:#444;letter-spacing:0.000px;white-space:pre;clip-path:inset(0 0 0 0)-webkit-text-stroke:0.2px #444;">S</div>
<div style="position:absolute;left:4.72px;top:127.80px;height:12px;line-height:12px;font-size:7.3px;font-weight:normal;color:#333;letter-spacing:0.000px;white-space:pre;-webkit-text-stroke:0.2px #333;">1</div>
<div style="position:absolute;left:4.72px;top:137.80px;height:12px;line-height:12px;font-size:7.3px;font-weight:normal;color:#2f5d43;letter-spacing:0.000px;white-space:pre;-webkit-text-stroke:0.2px #2f5d43;">2</div>
<div style="position:absolute;left:4.72px;top:147.20px;height:12px;line-height:12px;font-size:7.3px;font-weight:normal;color:#333;letter-spacing:0.000px;white-space:pre;-webkit-text-stroke:0.2px #333;">3</div>
<div style="position:absolute;left:4.72px;top:156.60px;height:12px;line-height:12px;font-size:7.3px;font-weight:normal;color:#333;letter-spacing:0.000px;white-space:pre;-webkit-text-stroke:0.2px #333;">4</div>
<div style="position:absolute;left:4.72px;top:166.00px;height:12px;line-height:12px;font-size:7.3px;font-weight:normal;color:#333;letter-spacing:0.000px;white-space:pre;-webkit-text-stroke:0.2px #333;">5</div>
<div style="position:absolute;left:4.72px;top:175.40px;height:12px;line-height:12px;font-size:7.3px;font-weight:normal;color:#333;letter-spacing:0.000px;white-space:pre;-webkit-text-stroke:0.2px #333;">6</div>
<div style="position:absolute;left:4.72px;top:184.80px;height:12px;line-height:12px;font-size:7.3px;font-weight:normal;color:#333;letter-spacing:0.000px;white-space:pre;-webkit-text-stroke:0.2px #333;">7</div>
<div style="position:absolute;left:4.72px;top:194.20px;height:12px;line-height:12px;font-size:7.3px;font-weight:normal;color:#333;letter-spacing:0.000px;white-space:pre;-webkit-text-stroke:0.2px #333;">8</div>
<div style="position:absolute;left:4.72px;top:203.60px;height:12px;line-height:12px;font-size:7.3px;font-weight:normal;color:#333;letter-spacing:0.000px;white-space:pre;-webkit-text-stroke:0.2px #333;">9</div>
<div style="position:absolute;left:2.69px;top:213.00px;height:12px;line-height:12px;font-size:7.3px;font-weight:normal;color:#333;letter-spacing:0.000px;white-space:pre;-webkit-text-stroke:0.2px #333;">10</div>
<div style="position:absolute;left:2.96px;top:222.40px;height:12px;line-height:12px;font-size:7.3px;font-weight:normal;color:#333;letter-spacing:0.000px;white-space:pre;-webkit-text-stroke:0.2px #333;">11</div>
<div style="position:absolute;left:2.69px;top:231.80px;height:12px;line-height:12px;font-size:7.3px;font-weight:normal;color:#333;letter-spacing:0.000px;white-space:pre;-webkit-text-stroke:0.2px #333;">12</div>
<div style="position:absolute;left:2.69px;top:241.20px;height:12px;line-height:12px;font-size:7.3px;font-weight:normal;color:#333;letter-spacing:0.000px;white-space:pre;-webkit-text-stroke:0.2px #333;">13</div>
<div style="position:absolute;left:2.69px;top:250.60px;height:12px;line-height:12px;font-size:7.3px;font-weight:normal;color:#333;letter-spacing:0.000px;white-space:pre;-webkit-text-stroke:0.2px #333;">14</div>
<div style="position:absolute;left:2.69px;top:260.00px;height:12px;line-height:12px;font-size:7.3px;font-weight:normal;color:#333;letter-spacing:0.000px;white-space:pre;-webkit-text-stroke:0.2px #333;">15</div>
<div style="position:absolute;left:2.69px;top:269.40px;height:12px;line-height:12px;font-size:7.3px;font-weight:normal;color:#333;letter-spacing:0.000px;white-space:pre;-webkit-text-stroke:0.2px #333;">16</div>
<div style="position:absolute;left:2.69px;top:278.80px;height:12px;line-height:12px;font-size:7.3px;font-weight:normal;color:#333;letter-spacing:0.000px;white-space:pre;-webkit-text-stroke:0.2px #333;">17</div>
<div style="position:absolute;left:2.69px;top:288.20px;height:12px;line-height:12px;font-size:7.3px;font-weight:normal;color:#333;letter-spacing:0.000px;white-space:pre;-webkit-text-stroke:0.2px #333;">18</div>
<div style="position:absolute;left:2.69px;top:297.60px;height:12px;line-height:12px;font-size:7.3px;font-weight:normal;color:#333;letter-spacing:0.000px;white-space:pre;-webkit-text-stroke:0.2px #333;">19</div>
<div style="position:absolute;left:2.69px;top:307.00px;height:12px;line-height:12px;font-size:7.3px;font-weight:normal;color:#333;letter-spacing:0.000px;white-space:pre;-webkit-text-stroke:0.2px #333;">20</div>
<div style="position:absolute;left:2.69px;top:316.40px;height:12px;line-height:12px;font-size:7.3px;font-weight:normal;color:#333;letter-spacing:0.000px;white-space:pre;-webkit-text-stroke:0.2px #333;">21</div>
<div style="position:absolute;left:2.69px;top:325.80px;height:12px;line-height:12px;font-size:7.3px;font-weight:normal;color:#333;letter-spacing:0.000px;white-space:pre;-webkit-text-stroke:0.2px #333;">22</div>
<div style="position:absolute;left:2.69px;top:335.20px;height:12px;line-height:12px;font-size:7.3px;font-weight:normal;color:#333;letter-spacing:0.000px;white-space:pre;-webkit-text-stroke:0.2px #333;">23</div>
<div style="position:absolute;left:2.69px;top:344.60px;height:12px;line-height:12px;font-size:7.3px;font-weight:normal;color:#333;letter-spacing:0.000px;white-space:pre;-webkit-text-stroke:0.2px #333;">24</div>
<div style="position:absolute;left:2.69px;top:354.00px;height:12px;line-height:12px;font-size:7.3px;font-weight:normal;color:#333;letter-spacing:0.000px;white-space:pre;-webkit-text-stroke:0.2px #333;">25</div>
<div style="position:absolute;left:2.69px;top:363.40px;height:12px;line-height:12px;font-size:7.3px;font-weight:normal;color:#333;letter-spacing:0.000px;white-space:pre;-webkit-text-stroke:0.2px #333;">26</div>
<div style="position:absolute;left:2.69px;top:372.80px;height:12px;line-height:12px;font-size:7.3px;font-weight:normal;color:#333;letter-spacing:0.000px;white-space:pre;-webkit-text-stroke:0.2px #333;">27</div>
<div style="position:absolute;left:2.69px;top:382.20px;height:12px;line-height:12px;font-size:7.3px;font-weight:normal;color:#333;letter-spacing:0.000px;white-space:pre;-webkit-text-stroke:0.2px #333;">28</div>
<div style="position:absolute;left:15.10px;top:127.60px;height:12px;line-height:12px;font-size:6.95px;font-weight:bold;color:#222;letter-spacing:0.000px;white-space:pre;width:40.90px;overflow:hidden;">Action</div>
<div style="position:absolute;left:58.00px;top:127.60px;height:12px;line-height:12px;font-size:6.95px;font-weight:bold;color:#222;letter-spacing:0.000px;white-space:pre;width:40.90px;overflow:hidden;">Item</div>
<div style="position:absolute;left:100.90px;top:127.60px;height:12px;line-height:12px;font-size:6.95px;font-weight:bold;color:#222;letter-spacing:0.000px;white-space:pre;width:40.90px;overflow:hidden;">Supplier</div>
<div style="position:absolute;left:143.80px;top:127.60px;height:12px;line-height:12px;font-size:6.95px;font-weight:bold;color:#222;letter-spacing:0.000px;white-space:pre;width:40.90px;overflow:hidden;">Origin Country</div>
<div style="position:absolute;left:186.70px;top:127.60px;height:12px;line-height:12px;font-size:6.95px;font-weight:bold;color:#222;letter-spacing:0.000px;white-space:pre;width:40.90px;overflow:hidden;">Unit Cost (Supplier)</div>
<div style="position:absolute;left:229.60px;top:127.60px;height:12px;line-height:12px;font-size:6.95px;font-weight:bold;color:#222;letter-spacing:0.000px;white-space:pre;width:40.90px;overflow:hidden;">Lead Time</div>
<div style="position:absolute;left:272.50px;top:127.60px;height:12px;line-height:12px;font-size:6.95px;font-weight:bold;color:#222;letter-spacing:0.000px;white-space:pre;width:40.90px;overflow:hidden;">Pickup To Location</div>
<div style="position:absolute;left:315.40px;top:127.60px;height:12px;line-height:12px;font-size:6.95px;font-weight:bold;color:#222;letter-spacing:0.000px;white-space:pre;width:40.90px;overflow:hidden;">Supplier Pack</div>
<div style="position:absolute;left:358.30px;top:127.60px;height:12px;line-height:12px;font-size:6.95px;font-weight:bold;color:#222;letter-spacing:0.000px;white-space:pre;width:40.90px;overflow:hidden;">Inner Pack Size</div>
<div style="position:absolute;left:401.20px;top:127.60px;height:12px;line-height:12px;font-size:6.95px;font-weight:bold;color:#222;letter-spacing:0.000px;white-space:pre;width:40.90px;overflow:hidden;">Rounding Level</div>
<div style="position:absolute;left:444.10px;top:127.60px;height:12px;line-height:12px;font-size:6.95px;font-weight:bold;color:#222;letter-spacing:0.000px;white-space:pre;width:40.90px;overflow:hidden;">Round To Inner</div>
<div style="position:absolute;left:487.00px;top:127.60px;height:12px;line-height:12px;font-size:6.95px;font-weight:bold;color:#222;letter-spacing:0.000px;white-space:pre;width:40.90px;overflow:hidden;">Round To Case</div>
<div style="position:absolute;left:529.90px;top:127.60px;height:12px;line-height:12px;font-size:6.95px;font-weight:bold;color:#222;letter-spacing:0.000px;white-space:pre;width:40.90px;overflow:hidden;">Round To Layer</div>
<div style="position:absolute;left:572.80px;top:127.60px;height:12px;line-height:12px;font-size:6.95px;font-weight:bold;color:#222;letter-spacing:0.000px;white-space:pre;width:40.90px;overflow:hidden;">Round To Pallet</div>
<div style="position:absolute;left:615.70px;top:127.60px;height:12px;line-height:12px;font-size:6.95px;font-weight:bold;color:#222;letter-spacing:0.000px;white-space:pre;width:40.90px;overflow:hidden;">Min Quantity</div>
<div style="position:absolute;left:658.60px;top:127.60px;height:12px;line-height:12px;font-size:6.95px;font-weight:bold;color:#222;letter-spacing:0.000px;white-space:pre;width:40.90px;overflow:hidden;">Max Quantity</div>
<div style="position:absolute;left:701.50px;top:127.60px;height:12px;line-height:12px;font-size:6.95px;font-weight:bold;color:#222;letter-spacing:0.000px;white-space:pre;width:40.90px;overflow:hidden;">Packing Method</div>
<div style="position:absolute;left:744.40px;top:127.60px;height:12px;line-height:12px;font-size:6.95px;font-weight:bold;color:#222;letter-spacing:0.000px;white-space:pre;width:40.90px;overflow:hidden;">Primary Supplier</div>
<div style="position:absolute;left:787.10px;top:127.60px;height:12px;line-height:12px;font-size:6.95px;font-weight:bold;color:#222;letter-spacing:0.000px;white-space:pre;width:1.70px;overflow:hidden;">I</div>
<div style="position:absolute;left:58.80px;top:137.80px;height:12px;line-height:12px;font-size:7.3px;font-weight:normal;color:#3a3a3a;letter-spacing:0.000px;white-space:pre;width:40.10px;overflow:hidden;-webkit-text-stroke:0.2px #3a3a3a;">100020000</div>
<div style="position:absolute;left:101.70px;top:137.80px;height:12px;line-height:12px;font-size:7.3px;font-weight:normal;color:#3a3a3a;letter-spacing:0.000px;white-space:pre;width:40.10px;overflow:hidden;-webkit-text-stroke:0.2px #3a3a3a;">301</div>
<div style="position:absolute;left:144.00px;top:137.80px;height:12px;line-height:12px;font-size:7.3px;font-weight:normal;color:#3a3a3a;letter-spacing:0.000px;white-space:pre;width:40.70px;overflow:hidden;-webkit-text-stroke:0.2px #3a3a3a;">FR</div>
<div style="position:absolute;left:187.70px;top:137.80px;height:12px;line-height:12px;font-size:7.3px;font-weight:normal;color:#3a3a3a;letter-spacing:0.000px;white-space:pre;width:39.90px;overflow:hidden;-webkit-text-stroke:0.2px #3a3a3a;">12</div>
<div style="position:absolute;left:316.40px;top:137.80px;height:12px;line-height:12px;font-size:7.3px;font-weight:normal;color:#3a3a3a;letter-spacing:0.000px;white-space:pre;width:39.90px;overflow:hidden;-webkit-text-stroke:0.2px #3a3a3a;">10</div>
<div style="position:absolute;left:359.30px;top:137.80px;height:12px;line-height:12px;font-size:7.3px;font-weight:normal;color:#3a3a3a;letter-spacing:0.000px;white-space:pre;width:39.90px;overflow:hidden;-webkit-text-stroke:0.2px #3a3a3a;">1</div>
<div style="position:absolute;left:401.40px;top:137.80px;height:12px;line-height:12px;font-size:7.3px;font-weight:normal;color:#3a3a3a;letter-spacing:0.000px;white-space:pre;width:40.70px;overflow:hidden;-webkit-text-stroke:0.2px #3a3a3a;">Case</div>
<div style="position:absolute;left:445.10px;top:137.80px;height:12px;line-height:12px;font-size:7.3px;font-weight:normal;color:#3a3a3a;letter-spacing:0.000px;white-space:pre;width:39.90px;overflow:hidden;-webkit-text-stroke:0.2px #3a3a3a;">50</div>
<div style="position:absolute;left:488.00px;top:137.80px;height:12px;line-height:12px;font-size:7.3px;font-weight:normal;color:#3a3a3a;letter-spacing:0.000px;white-space:pre;width:39.90px;overflow:hidden;-webkit-text-stroke:0.2px #3a3a3a;">50</div>
<div style="position:absolute;left:530.90px;top:137.80px;height:12px;line-height:12px;font-size:7.3px;font-weight:normal;color:#3a3a3a;letter-spacing:0.000px;white-space:pre;width:39.90px;overflow:hidden;-webkit-text-stroke:0.2px #3a3a3a;">50</div>
<div style="position:absolute;left:573.80px;top:137.80px;height:12px;line-height:12px;font-size:7.3px;font-weight:normal;color:#3a3a3a;letter-spacing:0.000px;white-space:pre;width:39.90px;overflow:hidden;-webkit-text-stroke:0.2px #3a3a3a;">50</div>
<div style="position:absolute;left:701.70px;top:137.80px;height:12px;line-height:12px;font-size:7.3px;font-weight:normal;color:#3a3a3a;letter-spacing:0.000px;white-space:pre;width:40.70px;overflow:hidden;-webkit-text-stroke:0.2px #3a3a3a;">Flat</div>
<div style="position:absolute;left:744.60px;top:137.80px;height:12px;line-height:12px;font-size:7.3px;font-weight:normal;color:#3a3a3a;letter-spacing:0.000px;white-space:pre;width:40.70px;overflow:hidden;-webkit-text-stroke:0.2px #3a3a3a;">Yes</div>
<div style="position:absolute;left:787.10px;top:137.80px;height:12px;line-height:12px;font-size:7.3px;font-weight:normal;color:#3a3a3a;letter-spacing:0.000px;white-space:pre;width:1.70px;overflow:hidden;-webkit-text-stroke:0.2px #3a3a3a;">N</div>
<div style="position:absolute;left:58.80px;top:147.20px;height:12px;line-height:12px;font-size:7.3px;font-weight:normal;color:#3a3a3a;letter-spacing:0.000px;white-space:pre;width:40.10px;overflow:hidden;-webkit-text-stroke:0.2px #3a3a3a;">100020000</div>
<div style="position:absolute;left:101.70px;top:147.20px;height:12px;line-height:12px;font-size:7.3px;font-weight:normal;color:#3a3a3a;letter-spacing:0.000px;white-space:pre;width:40.10px;overflow:hidden;-webkit-text-stroke:0.2px #3a3a3a;">301</div>
<div style="position:absolute;left:144.00px;top:147.20px;height:12px;line-height:12px;font-size:7.3px;font-weight:normal;color:#3a3a3a;letter-spacing:0.000px;white-space:pre;width:40.70px;overflow:hidden;-webkit-text-stroke:0.2px #3a3a3a;">HU</div>
<div style="position:absolute;left:187.70px;top:147.20px;height:12px;line-height:12px;font-size:7.3px;font-weight:normal;color:#3a3a3a;letter-spacing:0.000px;white-space:pre;width:39.90px;overflow:hidden;-webkit-text-stroke:0.2px #3a3a3a;">15</div>
<div style="position:absolute;left:316.40px;top:147.20px;height:12px;line-height:12px;font-size:7.3px;font-weight:normal;color:#3a3a3a;letter-spacing:0.000px;white-space:pre;width:39.90px;overflow:hidden;-webkit-text-stroke:0.2px #3a3a3a;">10</div>
<div style="position:absolute;left:359.30px;top:147.20px;height:12px;line-height:12px;font-size:7.3px;font-weight:normal;color:#3a3a3a;letter-spacing:0.000px;white-space:pre;width:39.90px;overflow:hidden;-webkit-text-stroke:0.2px #3a3a3a;">1</div>
<div style="position:absolute;left:401.40px;top:147.20px;height:12px;line-height:12px;font-size:7.3px;font-weight:normal;color:#3a3a3a;letter-spacing:0.000px;white-space:pre;width:40.70px;overflow:hidden;-webkit-text-stroke:0.2px #3a3a3a;">Case</div>
<div style="position:absolute;left:445.10px;top:147.20px;height:12px;line-height:12px;font-size:7.3px;font-weight:normal;color:#3a3a3a;letter-spacing:0.000px;white-space:pre;width:39.90px;overflow:hidden;-webkit-text-stroke:0.2px #3a3a3a;">50</div>
<div style="position:absolute;left:488.00px;top:147.20px;height:12px;line-height:12px;font-size:7.3px;font-weight:normal;color:#3a3a3a;letter-spacing:0.000px;white-space:pre;width:39.90px;overflow:hidden;-webkit-text-stroke:0.2px #3a3a3a;">50</div>
<div style="position:absolute;left:530.90px;top:147.20px;height:12px;line-height:12px;font-size:7.3px;font-weight:normal;color:#3a3a3a;letter-spacing:0.000px;white-space:pre;width:39.90px;overflow:hidden;-webkit-text-stroke:0.2px #3a3a3a;">50</div>
<div style="position:absolute;left:573.80px;top:147.20px;height:12px;line-height:12px;font-size:7.3px;font-weight:normal;color:#3a3a3a;letter-spacing:0.000px;white-space:pre;width:39.90px;overflow:hidden;-webkit-text-stroke:0.2px #3a3a3a;">50</div>
<div style="position:absolute;left:701.70px;top:147.20px;height:12px;line-height:12px;font-size:7.3px;font-weight:normal;color:#3a3a3a;letter-spacing:0.000px;white-space:pre;width:40.70px;overflow:hidden;-webkit-text-stroke:0.2px #3a3a3a;">Flat</div>
<div style="position:absolute;left:744.60px;top:147.20px;height:12px;line-height:12px;font-size:7.3px;font-weight:normal;color:#3a3a3a;letter-spacing:0.000px;white-space:pre;width:40.70px;overflow:hidden;-webkit-text-stroke:0.2px #3a3a3a;">Yes</div>
<div style="position:absolute;left:787.10px;top:147.20px;height:12px;line-height:12px;font-size:7.3px;font-weight:normal;color:#3a3a3a;letter-spacing:0.000px;white-space:pre;width:1.70px;overflow:hidden;-webkit-text-stroke:0.2px #3a3a3a;">N</div>
<div style="position:absolute;left:58.80px;top:156.60px;height:12px;line-height:12px;font-size:7.3px;font-weight:normal;color:#3a3a3a;letter-spacing:0.000px;white-space:pre;width:40.10px;overflow:hidden;-webkit-text-stroke:0.2px #3a3a3a;">100020000</div>
<div style="position:absolute;left:101.70px;top:156.60px;height:12px;line-height:12px;font-size:7.3px;font-weight:normal;color:#3a3a3a;letter-spacing:0.000px;white-space:pre;width:40.10px;overflow:hidden;-webkit-text-stroke:0.2px #3a3a3a;">301</div>
<div style="position:absolute;left:144.00px;top:156.60px;height:12px;line-height:12px;font-size:7.3px;font-weight:normal;color:#3a3a3a;letter-spacing:0.000px;white-space:pre;width:40.70px;overflow:hidden;-webkit-text-stroke:0.2px #3a3a3a;">US</div>
<div style="position:absolute;left:187.70px;top:156.60px;height:12px;line-height:12px;font-size:7.3px;font-weight:normal;color:#3a3a3a;letter-spacing:0.000px;white-space:pre;width:39.90px;overflow:hidden;-webkit-text-stroke:0.2px #3a3a3a;">10</div>
<div style="position:absolute;left:316.40px;top:156.60px;height:12px;line-height:12px;font-size:7.3px;font-weight:normal;color:#3a3a3a;letter-spacing:0.000px;white-space:pre;width:39.90px;overflow:hidden;-webkit-text-stroke:0.2px #3a3a3a;">10</div>
<div style="position:absolute;left:359.30px;top:156.60px;height:12px;line-height:12px;font-size:7.3px;font-weight:normal;color:#3a3a3a;letter-spacing:0.000px;white-space:pre;width:39.90px;overflow:hidden;-webkit-text-stroke:0.2px #3a3a3a;">1</div>
<div style="position:absolute;left:401.40px;top:156.60px;height:12px;line-height:12px;font-size:7.3px;font-weight:normal;color:#3a3a3a;letter-spacing:0.000px;white-space:pre;width:40.70px;overflow:hidden;-webkit-text-stroke:0.2px #3a3a3a;">Case</div>
<div style="position:absolute;left:445.10px;top:156.60px;height:12px;line-height:12px;font-size:7.3px;font-weight:normal;color:#3a3a3a;letter-spacing:0.000px;white-space:pre;width:39.90px;overflow:hidden;-webkit-text-stroke:0.2px #3a3a3a;">50</div>
<div style="position:absolute;left:488.00px;top:156.60px;height:12px;line-height:12px;font-size:7.3px;font-weight:normal;color:#3a3a3a;letter-spacing:0.000px;white-space:pre;width:39.90px;overflow:hidden;-webkit-text-stroke:0.2px #3a3a3a;">50</div>
<div style="position:absolute;left:530.90px;top:156.60px;height:12px;line-height:12px;font-size:7.3px;font-weight:normal;color:#3a3a3a;letter-spacing:0.000px;white-space:pre;width:39.90px;overflow:hidden;-webkit-text-stroke:0.2px #3a3a3a;">50</div>
<div style="position:absolute;left:573.80px;top:156.60px;height:12px;line-height:12px;font-size:7.3px;font-weight:normal;color:#3a3a3a;letter-spacing:0.000px;white-space:pre;width:39.90px;overflow:hidden;-webkit-text-stroke:0.2px #3a3a3a;">50</div>
<div style="position:absolute;left:701.70px;top:156.60px;height:12px;line-height:12px;font-size:7.3px;font-weight:normal;color:#3a3a3a;letter-spacing:0.000px;white-space:pre;width:40.70px;overflow:hidden;-webkit-text-stroke:0.2px #3a3a3a;">Flat</div>
<div style="position:absolute;left:744.60px;top:156.60px;height:12px;line-height:12px;font-size:7.3px;font-weight:normal;color:#3a3a3a;letter-spacing:0.000px;white-space:pre;width:40.70px;overflow:hidden;-webkit-text-stroke:0.2px #3a3a3a;">Yes</div>
<div style="position:absolute;left:787.10px;top:156.60px;height:12px;line-height:12px;font-size:7.3px;font-weight:normal;color:#3a3a3a;letter-spacing:0.000px;white-space:pre;width:1.70px;overflow:hidden;-webkit-text-stroke:0.2px #3a3a3a;">Y</div>
<div style="position:absolute;left:58.80px;top:166.00px;height:12px;line-height:12px;font-size:7.3px;font-weight:normal;color:#3a3a3a;letter-spacing:0.000px;white-space:pre;width:40.10px;overflow:hidden;-webkit-text-stroke:0.2px #3a3a3a;">100030077</div>
<div style="position:absolute;left:101.70px;top:166.00px;height:12px;line-height:12px;font-size:7.3px;font-weight:normal;color:#3a3a3a;letter-spacing:0.000px;white-space:pre;width:40.10px;overflow:hidden;-webkit-text-stroke:0.2px #3a3a3a;">301</div>
<div style="position:absolute;left:144.00px;top:166.00px;height:12px;line-height:12px;font-size:7.3px;font-weight:normal;color:#3a3a3a;letter-spacing:0.000px;white-space:pre;width:40.70px;overflow:hidden;-webkit-text-stroke:0.2px #3a3a3a;">FR</div>
<div style="position:absolute;left:187.70px;top:166.00px;height:12px;line-height:12px;font-size:7.3px;font-weight:normal;color:#3a3a3a;letter-spacing:0.000px;white-space:pre;width:39.90px;overflow:hidden;-webkit-text-stroke:0.2px #3a3a3a;">12</div>
<div style="position:absolute;left:316.40px;top:166.00px;height:12px;line-height:12px;font-size:7.3px;font-weight:normal;color:#3a3a3a;letter-spacing:0.000px;white-space:pre;width:39.90px;overflow:hidden;-webkit-text-stroke:0.2px #3a3a3a;">10</div>
<div style="position:absolute;left:359.30px;top:166.00px;height:12px;line-height:12px;font-size:7.3px;font-weight:normal;color:#3a3a3a;letter-spacing:0.000px;white-space:pre;width:39.90px;overflow:hidden;-webkit-text-stroke:0.2px #3a3a3a;">1</div>
<div style="position:absolute;left:401.40px;top:166.00px;height:12px;line-height:12px;font-size:7.3px;font-weight:normal;color:#3a3a3a;letter-spacing:0.000px;white-space:pre;width:40.70px;overflow:hidden;-webkit-text-stroke:0.2px #3a3a3a;">Case</div>
<div style="position:absolute;left:445.10px;top:166.00px;height:12px;line-height:12px;font-size:7.3px;font-weight:normal;color:#3a3a3a;letter-spacing:0.000px;white-space:pre;width:39.90px;overflow:hidden;-webkit-text-stroke:0.2px #3a3a3a;">50</div>
<div style="position:absolute;left:488.00px;top:166.00px;height:12px;line-height:12px;font-size:7.3px;font-weight:normal;color:#3a3a3a;letter-spacing:0.000px;white-space:pre;width:39.90px;overflow:hidden;-webkit-text-stroke:0.2px #3a3a3a;">50</div>
<div style="position:absolute;left:530.90px;top:166.00px;height:12px;line-height:12px;font-size:7.3px;font-weight:normal;color:#3a3a3a;letter-spacing:0.000px;white-space:pre;width:39.90px;overflow:hidden;-webkit-text-stroke:0.2px #3a3a3a;">50</div>
<div style="position:absolute;left:573.80px;top:166.00px;height:12px;line-height:12px;font-size:7.3px;font-weight:normal;color:#3a3a3a;letter-spacing:0.000px;white-space:pre;width:39.90px;overflow:hidden;-webkit-text-stroke:0.2px #3a3a3a;">50</div>
<div style="position:absolute;left:701.70px;top:166.00px;height:12px;line-height:12px;font-size:7.3px;font-weight:normal;color:#3a3a3a;letter-spacing:0.000px;white-space:pre;width:40.70px;overflow:hidden;-webkit-text-stroke:0.2px #3a3a3a;">Flat</div>
<div style="position:absolute;left:744.60px;top:166.00px;height:12px;line-height:12px;font-size:7.3px;font-weight:normal;color:#3a3a3a;letter-spacing:0.000px;white-space:pre;width:40.70px;overflow:hidden;-webkit-text-stroke:0.2px #3a3a3a;">Yes</div>
<div style="position:absolute;left:787.10px;top:166.00px;height:12px;line-height:12px;font-size:7.3px;font-weight:normal;color:#3a3a3a;letter-spacing:0.000px;white-space:pre;width:1.70px;overflow:hidden;-webkit-text-stroke:0.2px #3a3a3a;">N</div>
<div style="position:absolute;left:58.80px;top:175.40px;height:12px;line-height:12px;font-size:7.3px;font-weight:normal;color:#3a3a3a;letter-spacing:0.000px;white-space:pre;width:40.10px;overflow:hidden;-webkit-text-stroke:0.2px #3a3a3a;">100030077</div>
<div style="position:absolute;left:101.70px;top:175.40px;height:12px;line-height:12px;font-size:7.3px;font-weight:normal;color:#3a3a3a;letter-spacing:0.000px;white-space:pre;width:40.10px;overflow:hidden;-webkit-text-stroke:0.2px #3a3a3a;">301</div>
<div style="position:absolute;left:144.00px;top:175.40px;height:12px;line-height:12px;font-size:7.3px;font-weight:normal;color:#3a3a3a;letter-spacing:0.000px;white-space:pre;width:40.70px;overflow:hidden;-webkit-text-stroke:0.2px #3a3a3a;">HU</div>
<div style="position:absolute;left:187.70px;top:175.40px;height:12px;line-height:12px;font-size:7.3px;font-weight:normal;color:#3a3a3a;letter-spacing:0.000px;white-space:pre;width:39.90px;overflow:hidden;-webkit-text-stroke:0.2px #3a3a3a;">15</div>
<div style="position:absolute;left:316.40px;top:175.40px;height:12px;line-height:12px;font-size:7.3px;font-weight:normal;color:#3a3a3a;letter-spacing:0.000px;white-space:pre;width:39.90px;overflow:hidden;-webkit-text-stroke:0.2px #3a3a3a;">10</div>
<div style="position:absolute;left:359.30px;top:175.40px;height:12px;line-height:12px;font-size:7.3px;font-weight:normal;color:#3a3a3a;letter-spacing:0.000px;white-space:pre;width:39.90px;overflow:hidden;-webkit-text-stroke:0.2px #3a3a3a;">1</div>
<div style="position:absolute;left:401.40px;top:175.40px;height:12px;line-height:12px;font-size:7.3px;font-weight:normal;color:#3a3a3a;letter-spacing:0.000px;white-space:pre;width:40.70px;overflow:hidden;-webkit-text-stroke:0.2px #3a3a3a;">Case</div>
<div style="position:absolute;left:445.10px;top:175.40px;height:12px;line-height:12px;font-size:7.3px;font-weight:normal;color:#3a3a3a;letter-spacing:0.000px;white-space:pre;width:39.90px;overflow:hidden;-webkit-text-stroke:0.2px #3a3a3a;">50</div>
<div style="position:absolute;left:488.00px;top:175.40px;height:12px;line-height:12px;font-size:7.3px;font-weight:normal;color:#3a3a3a;letter-spacing:0.000px;white-space:pre;width:39.90px;overflow:hidden;-webkit-text-stroke:0.2px #3a3a3a;">50</div>
<div style="position:absolute;left:530.90px;top:175.40px;height:12px;line-height:12px;font-size:7.3px;font-weight:normal;color:#3a3a3a;letter-spacing:0.000px;white-space:pre;width:39.90px;overflow:hidden;-webkit-text-stroke:0.2px #3a3a3a;">50</div>
<div style="position:absolute;left:573.80px;top:175.40px;height:12px;line-height:12px;font-size:7.3px;font-weight:normal;color:#3a3a3a;letter-spacing:0.000px;white-space:pre;width:39.90px;overflow:hidden;-webkit-text-stroke:0.2px #3a3a3a;">50</div>
<div style="position:absolute;left:701.70px;top:175.40px;height:12px;line-height:12px;font-size:7.3px;font-weight:normal;color:#3a3a3a;letter-spacing:0.000px;white-space:pre;width:40.70px;overflow:hidden;-webkit-text-stroke:0.2px #3a3a3a;">Flat</div>
<div style="position:absolute;left:744.60px;top:175.40px;height:12px;line-height:12px;font-size:7.3px;font-weight:normal;color:#3a3a3a;letter-spacing:0.000px;white-space:pre;width:40.70px;overflow:hidden;-webkit-text-stroke:0.2px #3a3a3a;">Yes</div>
<div style="position:absolute;left:787.10px;top:175.40px;height:12px;line-height:12px;font-size:7.3px;font-weight:normal;color:#3a3a3a;letter-spacing:0.000px;white-space:pre;width:1.70px;overflow:hidden;-webkit-text-stroke:0.2px #3a3a3a;">N</div>
<div style="position:absolute;left:58.80px;top:184.80px;height:12px;line-height:12px;font-size:7.3px;font-weight:normal;color:#3a3a3a;letter-spacing:0.000px;white-space:pre;width:40.10px;overflow:hidden;-webkit-text-stroke:0.2px #3a3a3a;">100030077</div>
<div style="position:absolute;left:101.70px;top:184.80px;height:12px;line-height:12px;font-size:7.3px;font-weight:normal;color:#3a3a3a;letter-spacing:0.000px;white-space:pre;width:40.10px;overflow:hidden;-webkit-text-stroke:0.2px #3a3a3a;">301</div>
<div style="position:absolute;left:144.00px;top:184.80px;height:12px;line-height:12px;font-size:7.3px;font-weight:normal;color:#3a3a3a;letter-spacing:0.000px;white-space:pre;width:40.70px;overflow:hidden;-webkit-text-stroke:0.2px #3a3a3a;">US</div>
<div style="position:absolute;left:187.70px;top:184.80px;height:12px;line-height:12px;font-size:7.3px;font-weight:normal;color:#3a3a3a;letter-spacing:0.000px;white-space:pre;width:39.90px;overflow:hidden;-webkit-text-stroke:0.2px #3a3a3a;">10</div>
<div style="position:absolute;left:316.40px;top:184.80px;height:12px;line-height:12px;font-size:7.3px;font-weight:normal;color:#3a3a3a;letter-spacing:0.000px;white-space:pre;width:39.90px;overflow:hidden;-webkit-text-stroke:0.2px #3a3a3a;">10</div>
<div style="position:absolute;left:359.30px;top:184.80px;height:12px;line-height:12px;font-size:7.3px;font-weight:normal;color:#3a3a3a;letter-spacing:0.000px;white-space:pre;width:39.90px;overflow:hidden;-webkit-text-stroke:0.2px #3a3a3a;">1</div>
<div style="position:absolute;left:401.40px;top:184.80px;height:12px;line-height:12px;font-size:7.3px;font-weight:normal;color:#3a3a3a;letter-spacing:0.000px;white-space:pre;width:40.70px;overflow:hidden;-webkit-text-stroke:0.2px #3a3a3a;">Case</div>
<div style="position:absolute;left:445.10px;top:184.80px;height:12px;line-height:12px;font-size:7.3px;font-weight:normal;color:#3a3a3a;letter-spacing:0.000px;white-space:pre;width:39.90px;overflow:hidden;-webkit-text-stroke:0.2px #3a3a3a;">50</div>
<div style="position:absolute;left:488.00px;top:184.80px;height:12px;line-height:12px;font-size:7.3px;font-weight:normal;color:#3a3a3a;letter-spacing:0.000px;white-space:pre;width:39.90px;overflow:hidden;-webkit-text-stroke:0.2px #3a3a3a;">50</div>
<div style="position:absolute;left:530.90px;top:184.80px;height:12px;line-height:12px;font-size:7.3px;font-weight:normal;color:#3a3a3a;letter-spacing:0.000px;white-space:pre;width:39.90px;overflow:hidden;-webkit-text-stroke:0.2px #3a3a3a;">50</div>
<div style="position:absolute;left:573.80px;top:184.80px;height:12px;line-height:12px;font-size:7.3px;font-weight:normal;color:#3a3a3a;letter-spacing:0.000px;white-space:pre;width:39.90px;overflow:hidden;-webkit-text-stroke:0.2px #3a3a3a;">50</div>
<div style="position:absolute;left:701.70px;top:184.80px;height:12px;line-height:12px;font-size:7.3px;font-weight:normal;color:#3a3a3a;letter-spacing:0.000px;white-space:pre;width:40.70px;overflow:hidden;-webkit-text-stroke:0.2px #3a3a3a;">Flat</div>
<div style="position:absolute;left:744.60px;top:184.80px;height:12px;line-height:12px;font-size:7.3px;font-weight:normal;color:#3a3a3a;letter-spacing:0.000px;white-space:pre;width:40.70px;overflow:hidden;-webkit-text-stroke:0.2px #3a3a3a;">Yes</div>
<div style="position:absolute;left:787.10px;top:184.80px;height:12px;line-height:12px;font-size:7.3px;font-weight:normal;color:#3a3a3a;letter-spacing:0.000px;white-space:pre;width:1.70px;overflow:hidden;-webkit-text-stroke:0.2px #3a3a3a;">Y</div>
<div style="position:absolute;left:58.80px;top:194.20px;height:12px;line-height:12px;font-size:7.3px;font-weight:normal;color:#3a3a3a;letter-spacing:0.000px;white-space:pre;width:40.10px;overflow:hidden;-webkit-text-stroke:0.2px #3a3a3a;">100030078</div>
<div style="position:absolute;left:101.70px;top:194.20px;height:12px;line-height:12px;font-size:7.3px;font-weight:normal;color:#3a3a3a;letter-spacing:0.000px;white-space:pre;width:40.10px;overflow:hidden;-webkit-text-stroke:0.2px #3a3a3a;">301</div>
<div style="position:absolute;left:144.00px;top:194.20px;height:12px;line-height:12px;font-size:7.3px;font-weight:normal;color:#3a3a3a;letter-spacing:0.000px;white-space:pre;width:40.70px;overflow:hidden;-webkit-text-stroke:0.2px #3a3a3a;">FR</div>
<div style="position:absolute;left:187.70px;top:194.20px;height:12px;line-height:12px;font-size:7.3px;font-weight:normal;color:#3a3a3a;letter-spacing:0.000px;white-space:pre;width:39.90px;overflow:hidden;-webkit-text-stroke:0.2px #3a3a3a;">12</div>
<div style="position:absolute;left:316.40px;top:194.20px;height:12px;line-height:12px;font-size:7.3px;font-weight:normal;color:#3a3a3a;letter-spacing:0.000px;white-space:pre;width:39.90px;overflow:hidden;-webkit-text-stroke:0.2px #3a3a3a;">10</div>
<div style="position:absolute;left:359.30px;top:194.20px;height:12px;line-height:12px;font-size:7.3px;font-weight:normal;color:#3a3a3a;letter-spacing:0.000px;white-space:pre;width:39.90px;overflow:hidden;-webkit-text-stroke:0.2px #3a3a3a;">1</div>
<div style="position:absolute;left:401.40px;top:194.20px;height:12px;line-height:12px;font-size:7.3px;font-weight:normal;color:#3a3a3a;letter-spacing:0.000px;white-space:pre;width:40.70px;overflow:hidden;-webkit-text-stroke:0.2px #3a3a3a;">Case</div>
<div style="position:absolute;left:445.10px;top:194.20px;height:12px;line-height:12px;font-size:7.3px;font-weight:normal;color:#3a3a3a;letter-spacing:0.000px;white-space:pre;width:39.90px;overflow:hidden;-webkit-text-stroke:0.2px #3a3a3a;">50</div>
<div style="position:absolute;left:488.00px;top:194.20px;height:12px;line-height:12px;font-size:7.3px;font-weight:normal;color:#3a3a3a;letter-spacing:0.000px;white-space:pre;width:39.90px;overflow:hidden;-webkit-text-stroke:0.2px #3a3a3a;">50</div>
<div style="position:absolute;left:530.90px;top:194.20px;height:12px;line-height:12px;font-size:7.3px;font-weight:normal;color:#3a3a3a;letter-spacing:0.000px;white-space:pre;width:39.90px;overflow:hidden;-webkit-text-stroke:0.2px #3a3a3a;">50</div>
<div style="position:absolute;left:573.80px;top:194.20px;height:12px;line-height:12px;font-size:7.3px;font-weight:normal;color:#3a3a3a;letter-spacing:0.000px;white-space:pre;width:39.90px;overflow:hidden;-webkit-text-stroke:0.2px #3a3a3a;">50</div>
<div style="position:absolute;left:701.70px;top:194.20px;height:12px;line-height:12px;font-size:7.3px;font-weight:normal;color:#3a3a3a;letter-spacing:0.000px;white-space:pre;width:40.70px;overflow:hidden;-webkit-text-stroke:0.2px #3a3a3a;">Flat</div>
<div style="position:absolute;left:744.60px;top:194.20px;height:12px;line-height:12px;font-size:7.3px;font-weight:normal;color:#3a3a3a;letter-spacing:0.000px;white-space:pre;width:40.70px;overflow:hidden;-webkit-text-stroke:0.2px #3a3a3a;">Yes</div>
<div style="position:absolute;left:787.10px;top:194.20px;height:12px;line-height:12px;font-size:7.3px;font-weight:normal;color:#3a3a3a;letter-spacing:0.000px;white-space:pre;width:1.70px;overflow:hidden;-webkit-text-stroke:0.2px #3a3a3a;">N</div>
<div style="position:absolute;left:58.80px;top:203.60px;height:12px;line-height:12px;font-size:7.3px;font-weight:normal;color:#3a3a3a;letter-spacing:0.000px;white-space:pre;width:40.10px;overflow:hidden;-webkit-text-stroke:0.2px #3a3a3a;">100030078</div>
<div style="position:absolute;left:101.70px;top:203.60px;height:12px;line-height:12px;font-size:7.3px;font-weight:normal;color:#3a3a3a;letter-spacing:0.000px;white-space:pre;width:40.10px;overflow:hidden;-webkit-text-stroke:0.2px #3a3a3a;">301</div>
<div style="position:absolute;left:144.00px;top:203.60px;height:12px;line-height:12px;font-size:7.3px;font-weight:normal;color:#3a3a3a;letter-spacing:0.000px;white-space:pre;width:40.70px;overflow:hidden;-webkit-text-stroke:0.2px #3a3a3a;">HU</div>
<div style="position:absolute;left:187.70px;top:203.60px;height:12px;line-height:12px;font-size:7.3px;font-weight:normal;color:#3a3a3a;letter-spacing:0.000px;white-space:pre;width:39.90px;overflow:hidden;-webkit-text-stroke:0.2px #3a3a3a;">15</div>
<div style="position:absolute;left:316.40px;top:203.60px;height:12px;line-height:12px;font-size:7.3px;font-weight:normal;color:#3a3a3a;letter-spacing:0.000px;white-space:pre;width:39.90px;overflow:hidden;-webkit-text-stroke:0.2px #3a3a3a;">10</div>
<div style="position:absolute;left:359.30px;top:203.60px;height:12px;line-height:12px;font-size:7.3px;font-weight:normal;color:#3a3a3a;letter-spacing:0.000px;white-space:pre;width:39.90px;overflow:hidden;-webkit-text-stroke:0.2px #3a3a3a;">1</div>
<div style="position:absolute;left:401.40px;top:203.60px;height:12px;line-height:12px;font-size:7.3px;font-weight:normal;color:#3a3a3a;letter-spacing:0.000px;white-space:pre;width:40.70px;overflow:hidden;-webkit-text-stroke:0.2px #3a3a3a;">Case</div>
<div style="position:absolute;left:445.10px;top:203.60px;height:12px;line-height:12px;font-size:7.3px;font-weight:normal;color:#3a3a3a;letter-spacing:0.000px;white-space:pre;width:39.90px;overflow:hidden;-webkit-text-stroke:0.2px #3a3a3a;">50</div>
<div style="position:absolute;left:488.00px;top:203.60px;height:12px;line-height:12px;font-size:7.3px;font-weight:normal;color:#3a3a3a;letter-spacing:0.000px;white-space:pre;width:39.90px;overflow:hidden;-webkit-text-stroke:0.2px #3a3a3a;">50</div>
<div style="position:absolute;left:530.90px;top:203.60px;height:12px;line-height:12px;font-size:7.3px;font-weight:normal;color:#3a3a3a;letter-spacing:0.000px;white-space:pre;width:39.90px;overflow:hidden;-webkit-text-stroke:0.2px #3a3a3a;">50</div>
<div style="position:absolute;left:573.80px;top:203.60px;height:12px;line-height:12px;font-size:7.3px;font-weight:normal;color:#3a3a3a;letter-spacing:0.000px;white-space:pre;width:39.90px;overflow:hidden;-webkit-text-stroke:0.2px #3a3a3a;">50</div>
<div style="position:absolute;left:701.70px;top:203.60px;height:12px;line-height:12px;font-size:7.3px;font-weight:normal;color:#3a3a3a;letter-spacing:0.000px;white-space:pre;width:40.70px;overflow:hidden;-webkit-text-stroke:0.2px #3a3a3a;">Flat</div>
<div style="position:absolute;left:744.60px;top:203.60px;height:12px;line-height:12px;font-size:7.3px;font-weight:normal;color:#3a3a3a;letter-spacing:0.000px;white-space:pre;width:40.70px;overflow:hidden;-webkit-text-stroke:0.2px #3a3a3a;">Yes</div>
<div style="position:absolute;left:787.10px;top:203.60px;height:12px;line-height:12px;font-size:7.3px;font-weight:normal;color:#3a3a3a;letter-spacing:0.000px;white-space:pre;width:1.70px;overflow:hidden;-webkit-text-stroke:0.2px #3a3a3a;">N</div>
<div style="position:absolute;left:58.80px;top:213.00px;height:12px;line-height:12px;font-size:7.3px;font-weight:normal;color:#3a3a3a;letter-spacing:0.000px;white-space:pre;width:40.10px;overflow:hidden;-webkit-text-stroke:0.2px #3a3a3a;">100030078</div>
<div style="position:absolute;left:101.70px;top:213.00px;height:12px;line-height:12px;font-size:7.3px;font-weight:normal;color:#3a3a3a;letter-spacing:0.000px;white-space:pre;width:40.10px;overflow:hidden;-webkit-text-stroke:0.2px #3a3a3a;">301</div>
<div style="position:absolute;left:144.00px;top:213.00px;height:12px;line-height:12px;font-size:7.3px;font-weight:normal;color:#3a3a3a;letter-spacing:0.000px;white-space:pre;width:40.70px;overflow:hidden;-webkit-text-stroke:0.2px #3a3a3a;">US</div>
<div style="position:absolute;left:187.70px;top:213.00px;height:12px;line-height:12px;font-size:7.3px;font-weight:normal;color:#3a3a3a;letter-spacing:0.000px;white-space:pre;width:39.90px;overflow:hidden;-webkit-text-stroke:0.2px #3a3a3a;">10</div>
<div style="position:absolute;left:316.40px;top:213.00px;height:12px;line-height:12px;font-size:7.3px;font-weight:normal;color:#3a3a3a;letter-spacing:0.000px;white-space:pre;width:39.90px;overflow:hidden;-webkit-text-stroke:0.2px #3a3a3a;">10</div>
<div style="position:absolute;left:359.30px;top:213.00px;height:12px;line-height:12px;font-size:7.3px;font-weight:normal;color:#3a3a3a;letter-spacing:0.000px;white-space:pre;width:39.90px;overflow:hidden;-webkit-text-stroke:0.2px #3a3a3a;">1</div>
<div style="position:absolute;left:401.40px;top:213.00px;height:12px;line-height:12px;font-size:7.3px;font-weight:normal;color:#3a3a3a;letter-spacing:0.000px;white-space:pre;width:40.70px;overflow:hidden;-webkit-text-stroke:0.2px #3a3a3a;">Case</div>
<div style="position:absolute;left:445.10px;top:213.00px;height:12px;line-height:12px;font-size:7.3px;font-weight:normal;color:#3a3a3a;letter-spacing:0.000px;white-space:pre;width:39.90px;overflow:hidden;-webkit-text-stroke:0.2px #3a3a3a;">50</div>
<div style="position:absolute;left:488.00px;top:213.00px;height:12px;line-height:12px;font-size:7.3px;font-weight:normal;color:#3a3a3a;letter-spacing:0.000px;white-space:pre;width:39.90px;overflow:hidden;-webkit-text-stroke:0.2px #3a3a3a;">50</div>
<div style="position:absolute;left:530.90px;top:213.00px;height:12px;line-height:12px;font-size:7.3px;font-weight:normal;color:#3a3a3a;letter-spacing:0.000px;white-space:pre;width:39.90px;overflow:hidden;-webkit-text-stroke:0.2px #3a3a3a;">50</div>
<div style="position:absolute;left:573.80px;top:213.00px;height:12px;line-height:12px;font-size:7.3px;font-weight:normal;color:#3a3a3a;letter-spacing:0.000px;white-space:pre;width:39.90px;overflow:hidden;-webkit-text-stroke:0.2px #3a3a3a;">50</div>
<div style="position:absolute;left:701.70px;top:213.00px;height:12px;line-height:12px;font-size:7.3px;font-weight:normal;color:#3a3a3a;letter-spacing:0.000px;white-space:pre;width:40.70px;overflow:hidden;-webkit-text-stroke:0.2px #3a3a3a;">Flat</div>
<div style="position:absolute;left:744.60px;top:213.00px;height:12px;line-height:12px;font-size:7.3px;font-weight:normal;color:#3a3a3a;letter-spacing:0.000px;white-space:pre;width:40.70px;overflow:hidden;-webkit-text-stroke:0.2px #3a3a3a;">Yes</div>
<div style="position:absolute;left:787.10px;top:213.00px;height:12px;line-height:12px;font-size:7.3px;font-weight:normal;color:#3a3a3a;letter-spacing:0.000px;white-space:pre;width:1.70px;overflow:hidden;-webkit-text-stroke:0.2px #3a3a3a;">Y</div>
<div style="position:absolute;left:58.80px;top:222.40px;height:12px;line-height:12px;font-size:7.3px;font-weight:normal;color:#3a3a3a;letter-spacing:0.000px;white-space:pre;width:40.10px;overflow:hidden;-webkit-text-stroke:0.2px #3a3a3a;">100030079</div>
<div style="position:absolute;left:101.70px;top:222.40px;height:12px;line-height:12px;font-size:7.3px;font-weight:normal;color:#3a3a3a;letter-spacing:0.000px;white-space:pre;width:40.10px;overflow:hidden;-webkit-text-stroke:0.2px #3a3a3a;">301</div>
<div style="position:absolute;left:144.00px;top:222.40px;height:12px;line-height:12px;font-size:7.3px;font-weight:normal;color:#3a3a3a;letter-spacing:0.000px;white-space:pre;width:40.70px;overflow:hidden;-webkit-text-stroke:0.2px #3a3a3a;">FR</div>
<div style="position:absolute;left:187.70px;top:222.40px;height:12px;line-height:12px;font-size:7.3px;font-weight:normal;color:#3a3a3a;letter-spacing:0.000px;white-space:pre;width:39.90px;overflow:hidden;-webkit-text-stroke:0.2px #3a3a3a;">12</div>
<div style="position:absolute;left:316.40px;top:222.40px;height:12px;line-height:12px;font-size:7.3px;font-weight:normal;color:#3a3a3a;letter-spacing:0.000px;white-space:pre;width:39.90px;overflow:hidden;-webkit-text-stroke:0.2px #3a3a3a;">10</div>
<div style="position:absolute;left:359.30px;top:222.40px;height:12px;line-height:12px;font-size:7.3px;font-weight:normal;color:#3a3a3a;letter-spacing:0.000px;white-space:pre;width:39.90px;overflow:hidden;-webkit-text-stroke:0.2px #3a3a3a;">1</div>
<div style="position:absolute;left:401.40px;top:222.40px;height:12px;line-height:12px;font-size:7.3px;font-weight:normal;color:#3a3a3a;letter-spacing:0.000px;white-space:pre;width:40.70px;overflow:hidden;-webkit-text-stroke:0.2px #3a3a3a;">Case</div>
<div style="position:absolute;left:445.10px;top:222.40px;height:12px;line-height:12px;font-size:7.3px;font-weight:normal;color:#3a3a3a;letter-spacing:0.000px;white-space:pre;width:39.90px;overflow:hidden;-webkit-text-stroke:0.2px #3a3a3a;">50</div>
<div style="position:absolute;left:488.00px;top:222.40px;height:12px;line-height:12px;font-size:7.3px;font-weight:normal;color:#3a3a3a;letter-spacing:0.000px;white-space:pre;width:39.90px;overflow:hidden;-webkit-text-stroke:0.2px #3a3a3a;">50</div>
<div style="position:absolute;left:530.90px;top:222.40px;height:12px;line-height:12px;font-size:7.3px;font-weight:normal;color:#3a3a3a;letter-spacing:0.000px;white-space:pre;width:39.90px;overflow:hidden;-webkit-text-stroke:0.2px #3a3a3a;">50</div>
<div style="position:absolute;left:573.80px;top:222.40px;height:12px;line-height:12px;font-size:7.3px;font-weight:normal;color:#3a3a3a;letter-spacing:0.000px;white-space:pre;width:39.90px;overflow:hidden;-webkit-text-stroke:0.2px #3a3a3a;">50</div>
<div style="position:absolute;left:701.70px;top:222.40px;height:12px;line-height:12px;font-size:7.3px;font-weight:normal;color:#3a3a3a;letter-spacing:0.000px;white-space:pre;width:40.70px;overflow:hidden;-webkit-text-stroke:0.2px #3a3a3a;">Flat</div>
<div style="position:absolute;left:744.60px;top:222.40px;height:12px;line-height:12px;font-size:7.3px;font-weight:normal;color:#3a3a3a;letter-spacing:0.000px;white-space:pre;width:40.70px;overflow:hidden;-webkit-text-stroke:0.2px #3a3a3a;">Yes</div>
<div style="position:absolute;left:787.10px;top:222.40px;height:12px;line-height:12px;font-size:7.3px;font-weight:normal;color:#3a3a3a;letter-spacing:0.000px;white-space:pre;width:1.70px;overflow:hidden;-webkit-text-stroke:0.2px #3a3a3a;">N</div>
<div style="position:absolute;left:58.80px;top:231.80px;height:12px;line-height:12px;font-size:7.3px;font-weight:normal;color:#3a3a3a;letter-spacing:0.000px;white-space:pre;width:40.10px;overflow:hidden;-webkit-text-stroke:0.2px #3a3a3a;">100030079</div>
<div style="position:absolute;left:101.70px;top:231.80px;height:12px;line-height:12px;font-size:7.3px;font-weight:normal;color:#3a3a3a;letter-spacing:0.000px;white-space:pre;width:40.10px;overflow:hidden;-webkit-text-stroke:0.2px #3a3a3a;">301</div>
<div style="position:absolute;left:144.00px;top:231.80px;height:12px;line-height:12px;font-size:7.3px;font-weight:normal;color:#3a3a3a;letter-spacing:0.000px;white-space:pre;width:40.70px;overflow:hidden;-webkit-text-stroke:0.2px #3a3a3a;">HU</div>
<div style="position:absolute;left:187.70px;top:231.80px;height:12px;line-height:12px;font-size:7.3px;font-weight:normal;color:#3a3a3a;letter-spacing:0.000px;white-space:pre;width:39.90px;overflow:hidden;-webkit-text-stroke:0.2px #3a3a3a;">15</div>
<div style="position:absolute;left:316.40px;top:231.80px;height:12px;line-height:12px;font-size:7.3px;font-weight:normal;color:#3a3a3a;letter-spacing:0.000px;white-space:pre;width:39.90px;overflow:hidden;-webkit-text-stroke:0.2px #3a3a3a;">10</div>
<div style="position:absolute;left:359.30px;top:231.80px;height:12px;line-height:12px;font-size:7.3px;font-weight:normal;color:#3a3a3a;letter-spacing:0.000px;white-space:pre;width:39.90px;overflow:hidden;-webkit-text-stroke:0.2px #3a3a3a;">1</div>
<div style="position:absolute;left:401.40px;top:231.80px;height:12px;line-height:12px;font-size:7.3px;font-weight:normal;color:#3a3a3a;letter-spacing:0.000px;white-space:pre;width:40.70px;overflow:hidden;-webkit-text-stroke:0.2px #3a3a3a;">Case</div>
<div style="position:absolute;left:445.10px;top:231.80px;height:12px;line-height:12px;font-size:7.3px;font-weight:normal;color:#3a3a3a;letter-spacing:0.000px;white-space:pre;width:39.90px;overflow:hidden;-webkit-text-stroke:0.2px #3a3a3a;">50</div>
<div style="position:absolute;left:488.00px;top:231.80px;height:12px;line-height:12px;font-size:7.3px;font-weight:normal;color:#3a3a3a;letter-spacing:0.000px;white-space:pre;width:39.90px;overflow:hidden;-webkit-text-stroke:0.2px #3a3a3a;">50</div>
<div style="position:absolute;left:530.90px;top:231.80px;height:12px;line-height:12px;font-size:7.3px;font-weight:normal;color:#3a3a3a;letter-spacing:0.000px;white-space:pre;width:39.90px;overflow:hidden;-webkit-text-stroke:0.2px #3a3a3a;">50</div>
<div style="position:absolute;left:573.80px;top:231.80px;height:12px;line-height:12px;font-size:7.3px;font-weight:normal;color:#3a3a3a;letter-spacing:0.000px;white-space:pre;width:39.90px;overflow:hidden;-webkit-text-stroke:0.2px #3a3a3a;">50</div>
<div style="position:absolute;left:701.70px;top:231.80px;height:12px;line-height:12px;font-size:7.3px;font-weight:normal;color:#3a3a3a;letter-spacing:0.000px;white-space:pre;width:40.70px;overflow:hidden;-webkit-text-stroke:0.2px #3a3a3a;">Flat</div>
<div style="position:absolute;left:744.60px;top:231.80px;height:12px;line-height:12px;font-size:7.3px;font-weight:normal;color:#3a3a3a;letter-spacing:0.000px;white-space:pre;width:40.70px;overflow:hidden;-webkit-text-stroke:0.2px #3a3a3a;">Yes</div>
<div style="position:absolute;left:787.10px;top:231.80px;height:12px;line-height:12px;font-size:7.3px;font-weight:normal;color:#3a3a3a;letter-spacing:0.000px;white-space:pre;width:1.70px;overflow:hidden;-webkit-text-stroke:0.2px #3a3a3a;">N</div>
<div style="position:absolute;left:58.80px;top:241.20px;height:12px;line-height:12px;font-size:7.3px;font-weight:normal;color:#3a3a3a;letter-spacing:0.000px;white-space:pre;width:40.10px;overflow:hidden;-webkit-text-stroke:0.2px #3a3a3a;">100030079</div>
<div style="position:absolute;left:101.70px;top:241.20px;height:12px;line-height:12px;font-size:7.3px;font-weight:normal;color:#3a3a3a;letter-spacing:0.000px;white-space:pre;width:40.10px;overflow:hidden;-webkit-text-stroke:0.2px #3a3a3a;">301</div>
<div style="position:absolute;left:144.00px;top:241.20px;height:12px;line-height:12px;font-size:7.3px;font-weight:normal;color:#3a3a3a;letter-spacing:0.000px;white-space:pre;width:40.70px;overflow:hidden;-webkit-text-stroke:0.2px #3a3a3a;">US</div>
<div style="position:absolute;left:187.70px;top:241.20px;height:12px;line-height:12px;font-size:7.3px;font-weight:normal;color:#3a3a3a;letter-spacing:0.000px;white-space:pre;width:39.90px;overflow:hidden;-webkit-text-stroke:0.2px #3a3a3a;">10</div>
<div style="position:absolute;left:316.40px;top:241.20px;height:12px;line-height:12px;font-size:7.3px;font-weight:normal;color:#3a3a3a;letter-spacing:0.000px;white-space:pre;width:39.90px;overflow:hidden;-webkit-text-stroke:0.2px #3a3a3a;">10</div>
<div style="position:absolute;left:359.30px;top:241.20px;height:12px;line-height:12px;font-size:7.3px;font-weight:normal;color:#3a3a3a;letter-spacing:0.000px;white-space:pre;width:39.90px;overflow:hidden;-webkit-text-stroke:0.2px #3a3a3a;">1</div>
<div style="position:absolute;left:401.40px;top:241.20px;height:12px;line-height:12px;font-size:7.3px;font-weight:normal;color:#3a3a3a;letter-spacing:0.000px;white-space:pre;width:40.70px;overflow:hidden;-webkit-text-stroke:0.2px #3a3a3a;">Case</div>
<div style="position:absolute;left:445.10px;top:241.20px;height:12px;line-height:12px;font-size:7.3px;font-weight:normal;color:#3a3a3a;letter-spacing:0.000px;white-space:pre;width:39.90px;overflow:hidden;-webkit-text-stroke:0.2px #3a3a3a;">50</div>
<div style="position:absolute;left:488.00px;top:241.20px;height:12px;line-height:12px;font-size:7.3px;font-weight:normal;color:#3a3a3a;letter-spacing:0.000px;white-space:pre;width:39.90px;overflow:hidden;-webkit-text-stroke:0.2px #3a3a3a;">50</div>
<div style="position:absolute;left:530.90px;top:241.20px;height:12px;line-height:12px;font-size:7.3px;font-weight:normal;color:#3a3a3a;letter-spacing:0.000px;white-space:pre;width:39.90px;overflow:hidden;-webkit-text-stroke:0.2px #3a3a3a;">50</div>
<div style="position:absolute;left:573.80px;top:241.20px;height:12px;line-height:12px;font-size:7.3px;font-weight:normal;color:#3a3a3a;letter-spacing:0.000px;white-space:pre;width:39.90px;overflow:hidden;-webkit-text-stroke:0.2px #3a3a3a;">50</div>
<div style="position:absolute;left:701.70px;top:241.20px;height:12px;line-height:12px;font-size:7.3px;font-weight:normal;color:#3a3a3a;letter-spacing:0.000px;white-space:pre;width:40.70px;overflow:hidden;-webkit-text-stroke:0.2px #3a3a3a;">Flat</div>
<div style="position:absolute;left:744.60px;top:241.20px;height:12px;line-height:12px;font-size:7.3px;font-weight:normal;color:#3a3a3a;letter-spacing:0.000px;white-space:pre;width:40.70px;overflow:hidden;-webkit-text-stroke:0.2px #3a3a3a;">Yes</div>
<div style="position:absolute;left:787.10px;top:241.20px;height:12px;line-height:12px;font-size:7.3px;font-weight:normal;color:#3a3a3a;letter-spacing:0.000px;white-space:pre;width:1.70px;overflow:hidden;-webkit-text-stroke:0.2px #3a3a3a;">Y</div>
<div style="position:absolute;left:58.80px;top:250.60px;height:12px;line-height:12px;font-size:7.3px;font-weight:normal;color:#3a3a3a;letter-spacing:0.000px;white-space:pre;width:40.10px;overflow:hidden;-webkit-text-stroke:0.2px #3a3a3a;">100030080</div>
<div style="position:absolute;left:101.70px;top:250.60px;height:12px;line-height:12px;font-size:7.3px;font-weight:normal;color:#3a3a3a;letter-spacing:0.000px;white-space:pre;width:40.10px;overflow:hidden;-webkit-text-stroke:0.2px #3a3a3a;">301</div>
<div style="position:absolute;left:144.00px;top:250.60px;height:12px;line-height:12px;font-size:7.3px;font-weight:normal;color:#3a3a3a;letter-spacing:0.000px;white-space:pre;width:40.70px;overflow:hidden;-webkit-text-stroke:0.2px #3a3a3a;">FR</div>
<div style="position:absolute;left:187.70px;top:250.60px;height:12px;line-height:12px;font-size:7.3px;font-weight:normal;color:#3a3a3a;letter-spacing:0.000px;white-space:pre;width:39.90px;overflow:hidden;-webkit-text-stroke:0.2px #3a3a3a;">12</div>
<div style="position:absolute;left:316.40px;top:250.60px;height:12px;line-height:12px;font-size:7.3px;font-weight:normal;color:#3a3a3a;letter-spacing:0.000px;white-space:pre;width:39.90px;overflow:hidden;-webkit-text-stroke:0.2px #3a3a3a;">10</div>
<div style="position:absolute;left:359.30px;top:250.60px;height:12px;line-height:12px;font-size:7.3px;font-weight:normal;color:#3a3a3a;letter-spacing:0.000px;white-space:pre;width:39.90px;overflow:hidden;-webkit-text-stroke:0.2px #3a3a3a;">1</div>
<div style="position:absolute;left:401.40px;top:250.60px;height:12px;line-height:12px;font-size:7.3px;font-weight:normal;color:#3a3a3a;letter-spacing:0.000px;white-space:pre;width:40.70px;overflow:hidden;-webkit-text-stroke:0.2px #3a3a3a;">Case</div>
<div style="position:absolute;left:445.10px;top:250.60px;height:12px;line-height:12px;font-size:7.3px;font-weight:normal;color:#3a3a3a;letter-spacing:0.000px;white-space:pre;width:39.90px;overflow:hidden;-webkit-text-stroke:0.2px #3a3a3a;">50</div>
<div style="position:absolute;left:488.00px;top:250.60px;height:12px;line-height:12px;font-size:7.3px;font-weight:normal;color:#3a3a3a;letter-spacing:0.000px;white-space:pre;width:39.90px;overflow:hidden;-webkit-text-stroke:0.2px #3a3a3a;">50</div>
<div style="position:absolute;left:530.90px;top:250.60px;height:12px;line-height:12px;font-size:7.3px;font-weight:normal;color:#3a3a3a;letter-spacing:0.000px;white-space:pre;width:39.90px;overflow:hidden;-webkit-text-stroke:0.2px #3a3a3a;">50</div>
<div style="position:absolute;left:573.80px;top:250.60px;height:12px;line-height:12px;font-size:7.3px;font-weight:normal;color:#3a3a3a;letter-spacing:0.000px;white-space:pre;width:39.90px;overflow:hidden;-webkit-text-stroke:0.2px #3a3a3a;">50</div>
<div style="position:absolute;left:701.70px;top:250.60px;height:12px;line-height:12px;font-size:7.3px;font-weight:normal;color:#3a3a3a;letter-spacing:0.000px;white-space:pre;width:40.70px;overflow:hidden;-webkit-text-stroke:0.2px #3a3a3a;">Flat</div>
<div style="position:absolute;left:744.60px;top:250.60px;height:12px;line-height:12px;font-size:7.3px;font-weight:normal;color:#3a3a3a;letter-spacing:0.000px;white-space:pre;width:40.70px;overflow:hidden;-webkit-text-stroke:0.2px #3a3a3a;">Yes</div>
<div style="position:absolute;left:787.10px;top:250.60px;height:12px;line-height:12px;font-size:7.3px;font-weight:normal;color:#3a3a3a;letter-spacing:0.000px;white-space:pre;width:1.70px;overflow:hidden;-webkit-text-stroke:0.2px #3a3a3a;">N</div>
<div style="position:absolute;left:58.80px;top:260.00px;height:12px;line-height:12px;font-size:7.3px;font-weight:normal;color:#3a3a3a;letter-spacing:0.000px;white-space:pre;width:40.10px;overflow:hidden;-webkit-text-stroke:0.2px #3a3a3a;">100030080</div>
<div style="position:absolute;left:101.70px;top:260.00px;height:12px;line-height:12px;font-size:7.3px;font-weight:normal;color:#3a3a3a;letter-spacing:0.000px;white-space:pre;width:40.10px;overflow:hidden;-webkit-text-stroke:0.2px #3a3a3a;">301</div>
<div style="position:absolute;left:144.00px;top:260.00px;height:12px;line-height:12px;font-size:7.3px;font-weight:normal;color:#3a3a3a;letter-spacing:0.000px;white-space:pre;width:40.70px;overflow:hidden;-webkit-text-stroke:0.2px #3a3a3a;">HU</div>
<div style="position:absolute;left:187.70px;top:260.00px;height:12px;line-height:12px;font-size:7.3px;font-weight:normal;color:#3a3a3a;letter-spacing:0.000px;white-space:pre;width:39.90px;overflow:hidden;-webkit-text-stroke:0.2px #3a3a3a;">15</div>
<div style="position:absolute;left:316.40px;top:260.00px;height:12px;line-height:12px;font-size:7.3px;font-weight:normal;color:#3a3a3a;letter-spacing:0.000px;white-space:pre;width:39.90px;overflow:hidden;-webkit-text-stroke:0.2px #3a3a3a;">10</div>
<div style="position:absolute;left:359.30px;top:260.00px;height:12px;line-height:12px;font-size:7.3px;font-weight:normal;color:#3a3a3a;letter-spacing:0.000px;white-space:pre;width:39.90px;overflow:hidden;-webkit-text-stroke:0.2px #3a3a3a;">1</div>
<div style="position:absolute;left:401.40px;top:260.00px;height:12px;line-height:12px;font-size:7.3px;font-weight:normal;color:#3a3a3a;letter-spacing:0.000px;white-space:pre;width:40.70px;overflow:hidden;-webkit-text-stroke:0.2px #3a3a3a;">Case</div>
<div style="position:absolute;left:445.10px;top:260.00px;height:12px;line-height:12px;font-size:7.3px;font-weight:normal;color:#3a3a3a;letter-spacing:0.000px;white-space:pre;width:39.90px;overflow:hidden;-webkit-text-stroke:0.2px #3a3a3a;">50</div>
<div style="position:absolute;left:488.00px;top:260.00px;height:12px;line-height:12px;font-size:7.3px;font-weight:normal;color:#3a3a3a;letter-spacing:0.000px;white-space:pre;width:39.90px;overflow:hidden;-webkit-text-stroke:0.2px #3a3a3a;">50</div>
<div style="position:absolute;left:530.90px;top:260.00px;height:12px;line-height:12px;font-size:7.3px;font-weight:normal;color:#3a3a3a;letter-spacing:0.000px;white-space:pre;width:39.90px;overflow:hidden;-webkit-text-stroke:0.2px #3a3a3a;">50</div>
<div style="position:absolute;left:573.80px;top:260.00px;height:12px;line-height:12px;font-size:7.3px;font-weight:normal;color:#3a3a3a;letter-spacing:0.000px;white-space:pre;width:39.90px;overflow:hidden;-webkit-text-stroke:0.2px #3a3a3a;">50</div>
<div style="position:absolute;left:701.70px;top:260.00px;height:12px;line-height:12px;font-size:7.3px;font-weight:normal;color:#3a3a3a;letter-spacing:0.000px;white-space:pre;width:40.70px;overflow:hidden;-webkit-text-stroke:0.2px #3a3a3a;">Flat</div>
<div style="position:absolute;left:744.60px;top:260.00px;height:12px;line-height:12px;font-size:7.3px;font-weight:normal;color:#3a3a3a;letter-spacing:0.000px;white-space:pre;width:40.70px;overflow:hidden;-webkit-text-stroke:0.2px #3a3a3a;">Yes</div>
<div style="position:absolute;left:787.10px;top:260.00px;height:12px;line-height:12px;font-size:7.3px;font-weight:normal;color:#3a3a3a;letter-spacing:0.000px;white-space:pre;width:1.70px;overflow:hidden;-webkit-text-stroke:0.2px #3a3a3a;">N</div>
<div style="position:absolute;left:58.80px;top:269.40px;height:12px;line-height:12px;font-size:7.3px;font-weight:normal;color:#3a3a3a;letter-spacing:0.000px;white-space:pre;width:40.10px;overflow:hidden;-webkit-text-stroke:0.2px #3a3a3a;">100030080</div>
<div style="position:absolute;left:101.70px;top:269.40px;height:12px;line-height:12px;font-size:7.3px;font-weight:normal;color:#3a3a3a;letter-spacing:0.000px;white-space:pre;width:40.10px;overflow:hidden;-webkit-text-stroke:0.2px #3a3a3a;">301</div>
<div style="position:absolute;left:144.00px;top:269.40px;height:12px;line-height:12px;font-size:7.3px;font-weight:normal;color:#3a3a3a;letter-spacing:0.000px;white-space:pre;width:40.70px;overflow:hidden;-webkit-text-stroke:0.2px #3a3a3a;">US</div>
<div style="position:absolute;left:187.70px;top:269.40px;height:12px;line-height:12px;font-size:7.3px;font-weight:normal;color:#3a3a3a;letter-spacing:0.000px;white-space:pre;width:39.90px;overflow:hidden;-webkit-text-stroke:0.2px #3a3a3a;">10</div>
<div style="position:absolute;left:316.40px;top:269.40px;height:12px;line-height:12px;font-size:7.3px;font-weight:normal;color:#3a3a3a;letter-spacing:0.000px;white-space:pre;width:39.90px;overflow:hidden;-webkit-text-stroke:0.2px #3a3a3a;">10</div>
<div style="position:absolute;left:359.30px;top:269.40px;height:12px;line-height:12px;font-size:7.3px;font-weight:normal;color:#3a3a3a;letter-spacing:0.000px;white-space:pre;width:39.90px;overflow:hidden;-webkit-text-stroke:0.2px #3a3a3a;">1</div>
<div style="position:absolute;left:401.40px;top:269.40px;height:12px;line-height:12px;font-size:7.3px;font-weight:normal;color:#3a3a3a;letter-spacing:0.000px;white-space:pre;width:40.70px;overflow:hidden;-webkit-text-stroke:0.2px #3a3a3a;">Case</div>
<div style="position:absolute;left:445.10px;top:269.40px;height:12px;line-height:12px;font-size:7.3px;font-weight:normal;color:#3a3a3a;letter-spacing:0.000px;white-space:pre;width:39.90px;overflow:hidden;-webkit-text-stroke:0.2px #3a3a3a;">50</div>
<div style="position:absolute;left:488.00px;top:269.40px;height:12px;line-height:12px;font-size:7.3px;font-weight:normal;color:#3a3a3a;letter-spacing:0.000px;white-space:pre;width:39.90px;overflow:hidden;-webkit-text-stroke:0.2px #3a3a3a;">50</div>
<div style="position:absolute;left:530.90px;top:269.40px;height:12px;line-height:12px;font-size:7.3px;font-weight:normal;color:#3a3a3a;letter-spacing:0.000px;white-space:pre;width:39.90px;overflow:hidden;-webkit-text-stroke:0.2px #3a3a3a;">50</div>
<div style="position:absolute;left:573.80px;top:269.40px;height:12px;line-height:12px;font-size:7.3px;font-weight:normal;color:#3a3a3a;letter-spacing:0.000px;white-space:pre;width:39.90px;overflow:hidden;-webkit-text-stroke:0.2px #3a3a3a;">50</div>
<div style="position:absolute;left:701.70px;top:269.40px;height:12px;line-height:12px;font-size:7.3px;font-weight:normal;color:#3a3a3a;letter-spacing:0.000px;white-space:pre;width:40.70px;overflow:hidden;-webkit-text-stroke:0.2px #3a3a3a;">Flat</div>
<div style="position:absolute;left:744.60px;top:269.40px;height:12px;line-height:12px;font-size:7.3px;font-weight:normal;color:#3a3a3a;letter-spacing:0.000px;white-space:pre;width:40.70px;overflow:hidden;-webkit-text-stroke:0.2px #3a3a3a;">Yes</div>
<div style="position:absolute;left:787.10px;top:269.40px;height:12px;line-height:12px;font-size:7.3px;font-weight:normal;color:#3a3a3a;letter-spacing:0.000px;white-space:pre;width:1.70px;overflow:hidden;-webkit-text-stroke:0.2px #3a3a3a;">Y</div>
<div style="position:absolute;left:58.80px;top:278.80px;height:12px;line-height:12px;font-size:7.3px;font-weight:normal;color:#3a3a3a;letter-spacing:0.000px;white-space:pre;width:40.10px;overflow:hidden;-webkit-text-stroke:0.2px #3a3a3a;">100030081</div>
<div style="position:absolute;left:101.70px;top:278.80px;height:12px;line-height:12px;font-size:7.3px;font-weight:normal;color:#3a3a3a;letter-spacing:0.000px;white-space:pre;width:40.10px;overflow:hidden;-webkit-text-stroke:0.2px #3a3a3a;">301</div>
<div style="position:absolute;left:144.00px;top:278.80px;height:12px;line-height:12px;font-size:7.3px;font-weight:normal;color:#3a3a3a;letter-spacing:0.000px;white-space:pre;width:40.70px;overflow:hidden;-webkit-text-stroke:0.2px #3a3a3a;">FR</div>
<div style="position:absolute;left:187.70px;top:278.80px;height:12px;line-height:12px;font-size:7.3px;font-weight:normal;color:#3a3a3a;letter-spacing:0.000px;white-space:pre;width:39.90px;overflow:hidden;-webkit-text-stroke:0.2px #3a3a3a;">12</div>
<div style="position:absolute;left:316.40px;top:278.80px;height:12px;line-height:12px;font-size:7.3px;font-weight:normal;color:#3a3a3a;letter-spacing:0.000px;white-space:pre;width:39.90px;overflow:hidden;-webkit-text-stroke:0.2px #3a3a3a;">10</div>
<div style="position:absolute;left:359.30px;top:278.80px;height:12px;line-height:12px;font-size:7.3px;font-weight:normal;color:#3a3a3a;letter-spacing:0.000px;white-space:pre;width:39.90px;overflow:hidden;-webkit-text-stroke:0.2px #3a3a3a;">1</div>
<div style="position:absolute;left:401.40px;top:278.80px;height:12px;line-height:12px;font-size:7.3px;font-weight:normal;color:#3a3a3a;letter-spacing:0.000px;white-space:pre;width:40.70px;overflow:hidden;-webkit-text-stroke:0.2px #3a3a3a;">Case</div>
<div style="position:absolute;left:445.10px;top:278.80px;height:12px;line-height:12px;font-size:7.3px;font-weight:normal;color:#3a3a3a;letter-spacing:0.000px;white-space:pre;width:39.90px;overflow:hidden;-webkit-text-stroke:0.2px #3a3a3a;">50</div>
<div style="position:absolute;left:488.00px;top:278.80px;height:12px;line-height:12px;font-size:7.3px;font-weight:normal;color:#3a3a3a;letter-spacing:0.000px;white-space:pre;width:39.90px;overflow:hidden;-webkit-text-stroke:0.2px #3a3a3a;">50</div>
<div style="position:absolute;left:530.90px;top:278.80px;height:12px;line-height:12px;font-size:7.3px;font-weight:normal;color:#3a3a3a;letter-spacing:0.000px;white-space:pre;width:39.90px;overflow:hidden;-webkit-text-stroke:0.2px #3a3a3a;">50</div>
<div style="position:absolute;left:573.80px;top:278.80px;height:12px;line-height:12px;font-size:7.3px;font-weight:normal;color:#3a3a3a;letter-spacing:0.000px;white-space:pre;width:39.90px;overflow:hidden;-webkit-text-stroke:0.2px #3a3a3a;">50</div>
<div style="position:absolute;left:701.70px;top:278.80px;height:12px;line-height:12px;font-size:7.3px;font-weight:normal;color:#3a3a3a;letter-spacing:0.000px;white-space:pre;width:40.70px;overflow:hidden;-webkit-text-stroke:0.2px #3a3a3a;">Flat</div>
<div style="position:absolute;left:744.60px;top:278.80px;height:12px;line-height:12px;font-size:7.3px;font-weight:normal;color:#3a3a3a;letter-spacing:0.000px;white-space:pre;width:40.70px;overflow:hidden;-webkit-text-stroke:0.2px #3a3a3a;">Yes</div>
<div style="position:absolute;left:787.10px;top:278.80px;height:12px;line-height:12px;font-size:7.3px;font-weight:normal;color:#3a3a3a;letter-spacing:0.000px;white-space:pre;width:1.70px;overflow:hidden;-webkit-text-stroke:0.2px #3a3a3a;">N</div>
<div style="position:absolute;left:58.80px;top:288.20px;height:12px;line-height:12px;font-size:7.3px;font-weight:normal;color:#3a3a3a;letter-spacing:0.000px;white-space:pre;width:40.10px;overflow:hidden;-webkit-text-stroke:0.2px #3a3a3a;">100030081</div>
<div style="position:absolute;left:101.70px;top:288.20px;height:12px;line-height:12px;font-size:7.3px;font-weight:normal;color:#3a3a3a;letter-spacing:0.000px;white-space:pre;width:40.10px;overflow:hidden;-webkit-text-stroke:0.2px #3a3a3a;">301</div>
<div style="position:absolute;left:144.00px;top:288.20px;height:12px;line-height:12px;font-size:7.3px;font-weight:normal;color:#3a3a3a;letter-spacing:0.000px;white-space:pre;width:40.70px;overflow:hidden;-webkit-text-stroke:0.2px #3a3a3a;">HU</div>
<div style="position:absolute;left:187.70px;top:288.20px;height:12px;line-height:12px;font-size:7.3px;font-weight:normal;color:#3a3a3a;letter-spacing:0.000px;white-space:pre;width:39.90px;overflow:hidden;-webkit-text-stroke:0.2px #3a3a3a;">15</div>
<div style="position:absolute;left:316.40px;top:288.20px;height:12px;line-height:12px;font-size:7.3px;font-weight:normal;color:#3a3a3a;letter-spacing:0.000px;white-space:pre;width:39.90px;overflow:hidden;-webkit-text-stroke:0.2px #3a3a3a;">10</div>
<div style="position:absolute;left:359.30px;top:288.20px;height:12px;line-height:12px;font-size:7.3px;font-weight:normal;color:#3a3a3a;letter-spacing:0.000px;white-space:pre;width:39.90px;overflow:hidden;-webkit-text-stroke:0.2px #3a3a3a;">1</div>
<div style="position:absolute;left:401.40px;top:288.20px;height:12px;line-height:12px;font-size:7.3px;font-weight:normal;color:#3a3a3a;letter-spacing:0.000px;white-space:pre;width:40.70px;overflow:hidden;-webkit-text-stroke:0.2px #3a3a3a;">Case</div>
<div style="position:absolute;left:445.10px;top:288.20px;height:12px;line-height:12px;font-size:7.3px;font-weight:normal;color:#3a3a3a;letter-spacing:0.000px;white-space:pre;width:39.90px;overflow:hidden;-webkit-text-stroke:0.2px #3a3a3a;">50</div>
<div style="position:absolute;left:488.00px;top:288.20px;height:12px;line-height:12px;font-size:7.3px;font-weight:normal;color:#3a3a3a;letter-spacing:0.000px;white-space:pre;width:39.90px;overflow:hidden;-webkit-text-stroke:0.2px #3a3a3a;">50</div>
<div style="position:absolute;left:530.90px;top:288.20px;height:12px;line-height:12px;font-size:7.3px;font-weight:normal;color:#3a3a3a;letter-spacing:0.000px;white-space:pre;width:39.90px;overflow:hidden;-webkit-text-stroke:0.2px #3a3a3a;">50</div>
<div style="position:absolute;left:573.80px;top:288.20px;height:12px;line-height:12px;font-size:7.3px;font-weight:normal;color:#3a3a3a;letter-spacing:0.000px;white-space:pre;width:39.90px;overflow:hidden;-webkit-text-stroke:0.2px #3a3a3a;">50</div>
<div style="position:absolute;left:701.70px;top:288.20px;height:12px;line-height:12px;font-size:7.3px;font-weight:normal;color:#3a3a3a;letter-spacing:0.000px;white-space:pre;width:40.70px;overflow:hidden;-webkit-text-stroke:0.2px #3a3a3a;">Flat</div>
<div style="position:absolute;left:744.60px;top:288.20px;height:12px;line-height:12px;font-size:7.3px;font-weight:normal;color:#3a3a3a;letter-spacing:0.000px;white-space:pre;width:40.70px;overflow:hidden;-webkit-text-stroke:0.2px #3a3a3a;">Yes</div>
<div style="position:absolute;left:787.10px;top:288.20px;height:12px;line-height:12px;font-size:7.3px;font-weight:normal;color:#3a3a3a;letter-spacing:0.000px;white-space:pre;width:1.70px;overflow:hidden;-webkit-text-stroke:0.2px #3a3a3a;">N</div>
<div style="position:absolute;left:58.80px;top:297.60px;height:12px;line-height:12px;font-size:7.3px;font-weight:normal;color:#3a3a3a;letter-spacing:0.000px;white-space:pre;width:40.10px;overflow:hidden;-webkit-text-stroke:0.2px #3a3a3a;">100030081</div>
<div style="position:absolute;left:101.70px;top:297.60px;height:12px;line-height:12px;font-size:7.3px;font-weight:normal;color:#3a3a3a;letter-spacing:0.000px;white-space:pre;width:40.10px;overflow:hidden;-webkit-text-stroke:0.2px #3a3a3a;">301</div>
<div style="position:absolute;left:144.00px;top:297.60px;height:12px;line-height:12px;font-size:7.3px;font-weight:normal;color:#3a3a3a;letter-spacing:0.000px;white-space:pre;width:40.70px;overflow:hidden;-webkit-text-stroke:0.2px #3a3a3a;">US</div>
<div style="position:absolute;left:187.70px;top:297.60px;height:12px;line-height:12px;font-size:7.3px;font-weight:normal;color:#3a3a3a;letter-spacing:0.000px;white-space:pre;width:39.90px;overflow:hidden;-webkit-text-stroke:0.2px #3a3a3a;">10</div>
<div style="position:absolute;left:316.40px;top:297.60px;height:12px;line-height:12px;font-size:7.3px;font-weight:normal;color:#3a3a3a;letter-spacing:0.000px;white-space:pre;width:39.90px;overflow:hidden;-webkit-text-stroke:0.2px #3a3a3a;">10</div>
<div style="position:absolute;left:359.30px;top:297.60px;height:12px;line-height:12px;font-size:7.3px;font-weight:normal;color:#3a3a3a;letter-spacing:0.000px;white-space:pre;width:39.90px;overflow:hidden;-webkit-text-stroke:0.2px #3a3a3a;">1</div>
<div style="position:absolute;left:401.40px;top:297.60px;height:12px;line-height:12px;font-size:7.3px;font-weight:normal;color:#3a3a3a;letter-spacing:0.000px;white-space:pre;width:40.70px;overflow:hidden;-webkit-text-stroke:0.2px #3a3a3a;">Case</div>
<div style="position:absolute;left:445.10px;top:297.60px;height:12px;line-height:12px;font-size:7.3px;font-weight:normal;color:#3a3a3a;letter-spacing:0.000px;white-space:pre;width:39.90px;overflow:hidden;-webkit-text-stroke:0.2px #3a3a3a;">50</div>
<div style="position:absolute;left:488.00px;top:297.60px;height:12px;line-height:12px;font-size:7.3px;font-weight:normal;color:#3a3a3a;letter-spacing:0.000px;white-space:pre;width:39.90px;overflow:hidden;-webkit-text-stroke:0.2px #3a3a3a;">50</div>
<div style="position:absolute;left:530.90px;top:297.60px;height:12px;line-height:12px;font-size:7.3px;font-weight:normal;color:#3a3a3a;letter-spacing:0.000px;white-space:pre;width:39.90px;overflow:hidden;-webkit-text-stroke:0.2px #3a3a3a;">50</div>
<div style="position:absolute;left:573.80px;top:297.60px;height:12px;line-height:12px;font-size:7.3px;font-weight:normal;color:#3a3a3a;letter-spacing:0.000px;white-space:pre;width:39.90px;overflow:hidden;-webkit-text-stroke:0.2px #3a3a3a;">50</div>
<div style="position:absolute;left:701.70px;top:297.60px;height:12px;line-height:12px;font-size:7.3px;font-weight:normal;color:#3a3a3a;letter-spacing:0.000px;white-space:pre;width:40.70px;overflow:hidden;-webkit-text-stroke:0.2px #3a3a3a;">Flat</div>
<div style="position:absolute;left:744.60px;top:297.60px;height:12px;line-height:12px;font-size:7.3px;font-weight:normal;color:#3a3a3a;letter-spacing:0.000px;white-space:pre;width:40.70px;overflow:hidden;-webkit-text-stroke:0.2px #3a3a3a;">Yes</div>
<div style="position:absolute;left:787.10px;top:297.60px;height:12px;line-height:12px;font-size:7.3px;font-weight:normal;color:#3a3a3a;letter-spacing:0.000px;white-space:pre;width:1.70px;overflow:hidden;-webkit-text-stroke:0.2px #3a3a3a;">Y</div>
<div style="position:absolute;left:58.80px;top:307.00px;height:12px;line-height:12px;font-size:7.3px;font-weight:normal;color:#3a3a3a;letter-spacing:0.000px;white-space:pre;width:40.10px;overflow:hidden;-webkit-text-stroke:0.2px #3a3a3a;">100030082</div>
<div style="position:absolute;left:101.70px;top:307.00px;height:12px;line-height:12px;font-size:7.3px;font-weight:normal;color:#3a3a3a;letter-spacing:0.000px;white-space:pre;width:40.10px;overflow:hidden;-webkit-text-stroke:0.2px #3a3a3a;">301</div>
<div style="position:absolute;left:144.00px;top:307.00px;height:12px;line-height:12px;font-size:7.3px;font-weight:normal;color:#3a3a3a;letter-spacing:0.000px;white-space:pre;width:40.70px;overflow:hidden;-webkit-text-stroke:0.2px #3a3a3a;">FR</div>
<div style="position:absolute;left:187.70px;top:307.00px;height:12px;line-height:12px;font-size:7.3px;font-weight:normal;color:#3a3a3a;letter-spacing:0.000px;white-space:pre;width:39.90px;overflow:hidden;-webkit-text-stroke:0.2px #3a3a3a;">12</div>
<div style="position:absolute;left:316.40px;top:307.00px;height:12px;line-height:12px;font-size:7.3px;font-weight:normal;color:#3a3a3a;letter-spacing:0.000px;white-space:pre;width:39.90px;overflow:hidden;-webkit-text-stroke:0.2px #3a3a3a;">10</div>
<div style="position:absolute;left:359.30px;top:307.00px;height:12px;line-height:12px;font-size:7.3px;font-weight:normal;color:#3a3a3a;letter-spacing:0.000px;white-space:pre;width:39.90px;overflow:hidden;-webkit-text-stroke:0.2px #3a3a3a;">1</div>
<div style="position:absolute;left:401.40px;top:307.00px;height:12px;line-height:12px;font-size:7.3px;font-weight:normal;color:#3a3a3a;letter-spacing:0.000px;white-space:pre;width:40.70px;overflow:hidden;-webkit-text-stroke:0.2px #3a3a3a;">Case</div>
<div style="position:absolute;left:445.10px;top:307.00px;height:12px;line-height:12px;font-size:7.3px;font-weight:normal;color:#3a3a3a;letter-spacing:0.000px;white-space:pre;width:39.90px;overflow:hidden;-webkit-text-stroke:0.2px #3a3a3a;">50</div>
<div style="position:absolute;left:488.00px;top:307.00px;height:12px;line-height:12px;font-size:7.3px;font-weight:normal;color:#3a3a3a;letter-spacing:0.000px;white-space:pre;width:39.90px;overflow:hidden;-webkit-text-stroke:0.2px #3a3a3a;">50</div>
<div style="position:absolute;left:530.90px;top:307.00px;height:12px;line-height:12px;font-size:7.3px;font-weight:normal;color:#3a3a3a;letter-spacing:0.000px;white-space:pre;width:39.90px;overflow:hidden;-webkit-text-stroke:0.2px #3a3a3a;">50</div>
<div style="position:absolute;left:573.80px;top:307.00px;height:12px;line-height:12px;font-size:7.3px;font-weight:normal;color:#3a3a3a;letter-spacing:0.000px;white-space:pre;width:39.90px;overflow:hidden;-webkit-text-stroke:0.2px #3a3a3a;">50</div>
<div style="position:absolute;left:701.70px;top:307.00px;height:12px;line-height:12px;font-size:7.3px;font-weight:normal;color:#3a3a3a;letter-spacing:0.000px;white-space:pre;width:40.70px;overflow:hidden;-webkit-text-stroke:0.2px #3a3a3a;">Flat</div>
<div style="position:absolute;left:744.60px;top:307.00px;height:12px;line-height:12px;font-size:7.3px;font-weight:normal;color:#3a3a3a;letter-spacing:0.000px;white-space:pre;width:40.70px;overflow:hidden;-webkit-text-stroke:0.2px #3a3a3a;">Yes</div>
<div style="position:absolute;left:787.10px;top:307.00px;height:12px;line-height:12px;font-size:7.3px;font-weight:normal;color:#3a3a3a;letter-spacing:0.000px;white-space:pre;width:1.70px;overflow:hidden;-webkit-text-stroke:0.2px #3a3a3a;">N</div>
<div style="position:absolute;left:58.80px;top:316.40px;height:12px;line-height:12px;font-size:7.3px;font-weight:normal;color:#3a3a3a;letter-spacing:0.000px;white-space:pre;width:40.10px;overflow:hidden;-webkit-text-stroke:0.2px #3a3a3a;">100030082</div>
<div style="position:absolute;left:101.70px;top:316.40px;height:12px;line-height:12px;font-size:7.3px;font-weight:normal;color:#3a3a3a;letter-spacing:0.000px;white-space:pre;width:40.10px;overflow:hidden;-webkit-text-stroke:0.2px #3a3a3a;">301</div>
<div style="position:absolute;left:144.00px;top:316.40px;height:12px;line-height:12px;font-size:7.3px;font-weight:normal;color:#3a3a3a;letter-spacing:0.000px;white-space:pre;width:40.70px;overflow:hidden;-webkit-text-stroke:0.2px #3a3a3a;">HU</div>
<div style="position:absolute;left:187.70px;top:316.40px;height:12px;line-height:12px;font-size:7.3px;font-weight:normal;color:#3a3a3a;letter-spacing:0.000px;white-space:pre;width:39.90px;overflow:hidden;-webkit-text-stroke:0.2px #3a3a3a;">15</div>
<div style="position:absolute;left:316.40px;top:316.40px;height:12px;line-height:12px;font-size:7.3px;font-weight:normal;color:#3a3a3a;letter-spacing:0.000px;white-space:pre;width:39.90px;overflow:hidden;-webkit-text-stroke:0.2px #3a3a3a;">10</div>
<div style="position:absolute;left:359.30px;top:316.40px;height:12px;line-height:12px;font-size:7.3px;font-weight:normal;color:#3a3a3a;letter-spacing:0.000px;white-space:pre;width:39.90px;overflow:hidden;-webkit-text-stroke:0.2px #3a3a3a;">1</div>
<div style="position:absolute;left:401.40px;top:316.40px;height:12px;line-height:12px;font-size:7.3px;font-weight:normal;color:#3a3a3a;letter-spacing:0.000px;white-space:pre;width:40.70px;overflow:hidden;-webkit-text-stroke:0.2px #3a3a3a;">Case</div>
<div style="position:absolute;left:445.10px;top:316.40px;height:12px;line-height:12px;font-size:7.3px;font-weight:normal;color:#3a3a3a;letter-spacing:0.000px;white-space:pre;width:39.90px;overflow:hidden;-webkit-text-stroke:0.2px #3a3a3a;">50</div>
<div style="position:absolute;left:488.00px;top:316.40px;height:12px;line-height:12px;font-size:7.3px;font-weight:normal;color:#3a3a3a;letter-spacing:0.000px;white-space:pre;width:39.90px;overflow:hidden;-webkit-text-stroke:0.2px #3a3a3a;">50</div>
<div style="position:absolute;left:530.90px;top:316.40px;height:12px;line-height:12px;font-size:7.3px;font-weight:normal;color:#3a3a3a;letter-spacing:0.000px;white-space:pre;width:39.90px;overflow:hidden;-webkit-text-stroke:0.2px #3a3a3a;">50</div>
<div style="position:absolute;left:573.80px;top:316.40px;height:12px;line-height:12px;font-size:7.3px;font-weight:normal;color:#3a3a3a;letter-spacing:0.000px;white-space:pre;width:39.90px;overflow:hidden;-webkit-text-stroke:0.2px #3a3a3a;">50</div>
<div style="position:absolute;left:701.70px;top:316.40px;height:12px;line-height:12px;font-size:7.3px;font-weight:normal;color:#3a3a3a;letter-spacing:0.000px;white-space:pre;width:40.70px;overflow:hidden;-webkit-text-stroke:0.2px #3a3a3a;">Flat</div>
<div style="position:absolute;left:744.60px;top:316.40px;height:12px;line-height:12px;font-size:7.3px;font-weight:normal;color:#3a3a3a;letter-spacing:0.000px;white-space:pre;width:40.70px;overflow:hidden;-webkit-text-stroke:0.2px #3a3a3a;">Yes</div>
<div style="position:absolute;left:787.10px;top:316.40px;height:12px;line-height:12px;font-size:7.3px;font-weight:normal;color:#3a3a3a;letter-spacing:0.000px;white-space:pre;width:1.70px;overflow:hidden;-webkit-text-stroke:0.2px #3a3a3a;">N</div>
<div style="position:absolute;left:58.80px;top:325.80px;height:12px;line-height:12px;font-size:7.3px;font-weight:normal;color:#3a3a3a;letter-spacing:0.000px;white-space:pre;width:40.10px;overflow:hidden;-webkit-text-stroke:0.2px #3a3a3a;">100030082</div>
<div style="position:absolute;left:101.70px;top:325.80px;height:12px;line-height:12px;font-size:7.3px;font-weight:normal;color:#3a3a3a;letter-spacing:0.000px;white-space:pre;width:40.10px;overflow:hidden;-webkit-text-stroke:0.2px #3a3a3a;">301</div>
<div style="position:absolute;left:144.00px;top:325.80px;height:12px;line-height:12px;font-size:7.3px;font-weight:normal;color:#3a3a3a;letter-spacing:0.000px;white-space:pre;width:40.70px;overflow:hidden;-webkit-text-stroke:0.2px #3a3a3a;">US</div>
<div style="position:absolute;left:187.70px;top:325.80px;height:12px;line-height:12px;font-size:7.3px;font-weight:normal;color:#3a3a3a;letter-spacing:0.000px;white-space:pre;width:39.90px;overflow:hidden;-webkit-text-stroke:0.2px #3a3a3a;">10</div>
<div style="position:absolute;left:316.40px;top:325.80px;height:12px;line-height:12px;font-size:7.3px;font-weight:normal;color:#3a3a3a;letter-spacing:0.000px;white-space:pre;width:39.90px;overflow:hidden;-webkit-text-stroke:0.2px #3a3a3a;">10</div>
<div style="position:absolute;left:359.30px;top:325.80px;height:12px;line-height:12px;font-size:7.3px;font-weight:normal;color:#3a3a3a;letter-spacing:0.000px;white-space:pre;width:39.90px;overflow:hidden;-webkit-text-stroke:0.2px #3a3a3a;">1</div>
<div style="position:absolute;left:401.40px;top:325.80px;height:12px;line-height:12px;font-size:7.3px;font-weight:normal;color:#3a3a3a;letter-spacing:0.000px;white-space:pre;width:40.70px;overflow:hidden;-webkit-text-stroke:0.2px #3a3a3a;">Case</div>
<div style="position:absolute;left:445.10px;top:325.80px;height:12px;line-height:12px;font-size:7.3px;font-weight:normal;color:#3a3a3a;letter-spacing:0.000px;white-space:pre;width:39.90px;overflow:hidden;-webkit-text-stroke:0.2px #3a3a3a;">50</div>
<div style="position:absolute;left:488.00px;top:325.80px;height:12px;line-height:12px;font-size:7.3px;font-weight:normal;color:#3a3a3a;letter-spacing:0.000px;white-space:pre;width:39.90px;overflow:hidden;-webkit-text-stroke:0.2px #3a3a3a;">50</div>
<div style="position:absolute;left:530.90px;top:325.80px;height:12px;line-height:12px;font-size:7.3px;font-weight:normal;color:#3a3a3a;letter-spacing:0.000px;white-space:pre;width:39.90px;overflow:hidden;-webkit-text-stroke:0.2px #3a3a3a;">50</div>
<div style="position:absolute;left:573.80px;top:325.80px;height:12px;line-height:12px;font-size:7.3px;font-weight:normal;color:#3a3a3a;letter-spacing:0.000px;white-space:pre;width:39.90px;overflow:hidden;-webkit-text-stroke:0.2px #3a3a3a;">50</div>
<div style="position:absolute;left:701.70px;top:325.80px;height:12px;line-height:12px;font-size:7.3px;font-weight:normal;color:#3a3a3a;letter-spacing:0.000px;white-space:pre;width:40.70px;overflow:hidden;-webkit-text-stroke:0.2px #3a3a3a;">Flat</div>
<div style="position:absolute;left:744.60px;top:325.80px;height:12px;line-height:12px;font-size:7.3px;font-weight:normal;color:#3a3a3a;letter-spacing:0.000px;white-space:pre;width:40.70px;overflow:hidden;-webkit-text-stroke:0.2px #3a3a3a;">Yes</div>
<div style="position:absolute;left:787.10px;top:325.80px;height:12px;line-height:12px;font-size:7.3px;font-weight:normal;color:#3a3a3a;letter-spacing:0.000px;white-space:pre;width:1.70px;overflow:hidden;-webkit-text-stroke:0.2px #3a3a3a;">Y</div>
<div style="position:absolute;left:58.80px;top:335.20px;height:12px;line-height:12px;font-size:7.3px;font-weight:normal;color:#3a3a3a;letter-spacing:0.000px;white-space:pre;width:40.10px;overflow:hidden;-webkit-text-stroke:0.2px #3a3a3a;">100040000</div>
<div style="position:absolute;left:101.70px;top:335.20px;height:12px;line-height:12px;font-size:7.3px;font-weight:normal;color:#3a3a3a;letter-spacing:0.000px;white-space:pre;width:40.10px;overflow:hidden;-webkit-text-stroke:0.2px #3a3a3a;">301</div>
<div style="position:absolute;left:144.00px;top:335.20px;height:12px;line-height:12px;font-size:7.3px;font-weight:normal;color:#3a3a3a;letter-spacing:0.000px;white-space:pre;width:40.70px;overflow:hidden;-webkit-text-stroke:0.2px #3a3a3a;">ZA</div>
<div style="position:absolute;left:187.70px;top:335.20px;height:12px;line-height:12px;font-size:7.3px;font-weight:normal;color:#3a3a3a;letter-spacing:0.000px;white-space:pre;width:39.90px;overflow:hidden;-webkit-text-stroke:0.2px #3a3a3a;">5</div>
<div style="position:absolute;left:316.40px;top:335.20px;height:12px;line-height:12px;font-size:7.3px;font-weight:normal;color:#3a3a3a;letter-spacing:0.000px;white-space:pre;width:39.90px;overflow:hidden;-webkit-text-stroke:0.2px #3a3a3a;">30</div>
<div style="position:absolute;left:359.30px;top:335.20px;height:12px;line-height:12px;font-size:7.3px;font-weight:normal;color:#3a3a3a;letter-spacing:0.000px;white-space:pre;width:39.90px;overflow:hidden;-webkit-text-stroke:0.2px #3a3a3a;">6</div>
<div style="position:absolute;left:401.40px;top:335.20px;height:12px;line-height:12px;font-size:7.3px;font-weight:normal;color:#3a3a3a;letter-spacing:0.000px;white-space:pre;width:40.70px;overflow:hidden;-webkit-text-stroke:0.2px #3a3a3a;">Case</div>
<div style="position:absolute;left:445.10px;top:335.20px;height:12px;line-height:12px;font-size:7.3px;font-weight:normal;color:#3a3a3a;letter-spacing:0.000px;white-space:pre;width:39.90px;overflow:hidden;-webkit-text-stroke:0.2px #3a3a3a;">50</div>
<div style="position:absolute;left:488.00px;top:335.20px;height:12px;line-height:12px;font-size:7.3px;font-weight:normal;color:#3a3a3a;letter-spacing:0.000px;white-space:pre;width:39.90px;overflow:hidden;-webkit-text-stroke:0.2px #3a3a3a;">50</div>
<div style="position:absolute;left:530.90px;top:335.20px;height:12px;line-height:12px;font-size:7.3px;font-weight:normal;color:#3a3a3a;letter-spacing:0.000px;white-space:pre;width:39.90px;overflow:hidden;-webkit-text-stroke:0.2px #3a3a3a;">50</div>
<div style="position:absolute;left:573.80px;top:335.20px;height:12px;line-height:12px;font-size:7.3px;font-weight:normal;color:#3a3a3a;letter-spacing:0.000px;white-space:pre;width:39.90px;overflow:hidden;-webkit-text-stroke:0.2px #3a3a3a;">50</div>
<div style="position:absolute;left:701.70px;top:335.20px;height:12px;line-height:12px;font-size:7.3px;font-weight:normal;color:#3a3a3a;letter-spacing:0.000px;white-space:pre;width:40.70px;overflow:hidden;-webkit-text-stroke:0.2px #3a3a3a;">Flat</div>
<div style="position:absolute;left:744.60px;top:335.20px;height:12px;line-height:12px;font-size:7.3px;font-weight:normal;color:#3a3a3a;letter-spacing:0.000px;white-space:pre;width:40.70px;overflow:hidden;-webkit-text-stroke:0.2px #3a3a3a;">Yes</div>
<div style="position:absolute;left:787.10px;top:335.20px;height:12px;line-height:12px;font-size:7.3px;font-weight:normal;color:#3a3a3a;letter-spacing:0.000px;white-space:pre;width:1.70px;overflow:hidden;-webkit-text-stroke:0.2px #3a3a3a;">Y</div>
<div style="position:absolute;left:58.80px;top:344.60px;height:12px;line-height:12px;font-size:7.3px;font-weight:normal;color:#3a3a3a;letter-spacing:0.000px;white-space:pre;width:40.10px;overflow:hidden;-webkit-text-stroke:0.2px #3a3a3a;">100060000</div>
<div style="position:absolute;left:101.70px;top:344.60px;height:12px;line-height:12px;font-size:7.3px;font-weight:normal;color:#3a3a3a;letter-spacing:0.000px;white-space:pre;width:40.10px;overflow:hidden;-webkit-text-stroke:0.2px #3a3a3a;">301</div>
<div style="position:absolute;left:144.00px;top:344.60px;height:12px;line-height:12px;font-size:7.3px;font-weight:normal;color:#3a3a3a;letter-spacing:0.000px;white-space:pre;width:40.70px;overflow:hidden;-webkit-text-stroke:0.2px #3a3a3a;">US</div>
<div style="position:absolute;left:187.70px;top:344.60px;height:12px;line-height:12px;font-size:7.3px;font-weight:normal;color:#3a3a3a;letter-spacing:0.000px;white-space:pre;width:39.90px;overflow:hidden;-webkit-text-stroke:0.2px #3a3a3a;">5</div>
<div style="position:absolute;left:316.40px;top:344.60px;height:12px;line-height:12px;font-size:7.3px;font-weight:normal;color:#3a3a3a;letter-spacing:0.000px;white-space:pre;width:39.90px;overflow:hidden;-webkit-text-stroke:0.2px #3a3a3a;">1</div>
<div style="position:absolute;left:359.30px;top:344.60px;height:12px;line-height:12px;font-size:7.3px;font-weight:normal;color:#3a3a3a;letter-spacing:0.000px;white-space:pre;width:39.90px;overflow:hidden;-webkit-text-stroke:0.2px #3a3a3a;">1</div>
<div style="position:absolute;left:401.40px;top:344.60px;height:12px;line-height:12px;font-size:7.3px;font-weight:normal;color:#3a3a3a;letter-spacing:0.000px;white-space:pre;width:40.70px;overflow:hidden;-webkit-text-stroke:0.2px #3a3a3a;">Case</div>
<div style="position:absolute;left:445.10px;top:344.60px;height:12px;line-height:12px;font-size:7.3px;font-weight:normal;color:#3a3a3a;letter-spacing:0.000px;white-space:pre;width:39.90px;overflow:hidden;-webkit-text-stroke:0.2px #3a3a3a;">50</div>
<div style="position:absolute;left:488.00px;top:344.60px;height:12px;line-height:12px;font-size:7.3px;font-weight:normal;color:#3a3a3a;letter-spacing:0.000px;white-space:pre;width:39.90px;overflow:hidden;-webkit-text-stroke:0.2px #3a3a3a;">50</div>
<div style="position:absolute;left:530.90px;top:344.60px;height:12px;line-height:12px;font-size:7.3px;font-weight:normal;color:#3a3a3a;letter-spacing:0.000px;white-space:pre;width:39.90px;overflow:hidden;-webkit-text-stroke:0.2px #3a3a3a;">50</div>
<div style="position:absolute;left:573.80px;top:344.60px;height:12px;line-height:12px;font-size:7.3px;font-weight:normal;color:#3a3a3a;letter-spacing:0.000px;white-space:pre;width:39.90px;overflow:hidden;-webkit-text-stroke:0.2px #3a3a3a;">50</div>
<div style="position:absolute;left:701.70px;top:344.60px;height:12px;line-height:12px;font-size:7.3px;font-weight:normal;color:#3a3a3a;letter-spacing:0.000px;white-space:pre;width:40.70px;overflow:hidden;-webkit-text-stroke:0.2px #3a3a3a;">Flat</div>
<div style="position:absolute;left:744.60px;top:344.60px;height:12px;line-height:12px;font-size:7.3px;font-weight:normal;color:#3a3a3a;letter-spacing:0.000px;white-space:pre;width:40.70px;overflow:hidden;-webkit-text-stroke:0.2px #3a3a3a;">Yes</div>
<div style="position:absolute;left:787.10px;top:344.60px;height:12px;line-height:12px;font-size:7.3px;font-weight:normal;color:#3a3a3a;letter-spacing:0.000px;white-space:pre;width:1.70px;overflow:hidden;-webkit-text-stroke:0.2px #3a3a3a;">Y</div>
<div style="position:absolute;left:58.80px;top:354.00px;height:12px;line-height:12px;font-size:7.3px;font-weight:normal;color:#3a3a3a;letter-spacing:0.000px;white-space:pre;width:40.10px;overflow:hidden;-webkit-text-stroke:0.2px #3a3a3a;">100060003</div>
<div style="position:absolute;left:101.70px;top:354.00px;height:12px;line-height:12px;font-size:7.3px;font-weight:normal;color:#3a3a3a;letter-spacing:0.000px;white-space:pre;width:40.10px;overflow:hidden;-webkit-text-stroke:0.2px #3a3a3a;">301</div>
<div style="position:absolute;left:144.00px;top:354.00px;height:12px;line-height:12px;font-size:7.3px;font-weight:normal;color:#3a3a3a;letter-spacing:0.000px;white-space:pre;width:40.70px;overflow:hidden;-webkit-text-stroke:0.2px #3a3a3a;">US</div>
<div style="position:absolute;left:187.70px;top:354.00px;height:12px;line-height:12px;font-size:7.3px;font-weight:normal;color:#3a3a3a;letter-spacing:0.000px;white-space:pre;width:39.90px;overflow:hidden;-webkit-text-stroke:0.2px #3a3a3a;">5</div>
<div style="position:absolute;left:316.40px;top:354.00px;height:12px;line-height:12px;font-size:7.3px;font-weight:normal;color:#3a3a3a;letter-spacing:0.000px;white-space:pre;width:39.90px;overflow:hidden;-webkit-text-stroke:0.2px #3a3a3a;">1</div>
<div style="position:absolute;left:359.30px;top:354.00px;height:12px;line-height:12px;font-size:7.3px;font-weight:normal;color:#3a3a3a;letter-spacing:0.000px;white-space:pre;width:39.90px;overflow:hidden;-webkit-text-stroke:0.2px #3a3a3a;">1</div>
<div style="position:absolute;left:401.40px;top:354.00px;height:12px;line-height:12px;font-size:7.3px;font-weight:normal;color:#3a3a3a;letter-spacing:0.000px;white-space:pre;width:40.70px;overflow:hidden;-webkit-text-stroke:0.2px #3a3a3a;">Case</div>
<div style="position:absolute;left:445.10px;top:354.00px;height:12px;line-height:12px;font-size:7.3px;font-weight:normal;color:#3a3a3a;letter-spacing:0.000px;white-space:pre;width:39.90px;overflow:hidden;-webkit-text-stroke:0.2px #3a3a3a;">50</div>
<div style="position:absolute;left:488.00px;top:354.00px;height:12px;line-height:12px;font-size:7.3px;font-weight:normal;color:#3a3a3a;letter-spacing:0.000px;white-space:pre;width:39.90px;overflow:hidden;-webkit-text-stroke:0.2px #3a3a3a;">50</div>
<div style="position:absolute;left:530.90px;top:354.00px;height:12px;line-height:12px;font-size:7.3px;font-weight:normal;color:#3a3a3a;letter-spacing:0.000px;white-space:pre;width:39.90px;overflow:hidden;-webkit-text-stroke:0.2px #3a3a3a;">50</div>
<div style="position:absolute;left:573.80px;top:354.00px;height:12px;line-height:12px;font-size:7.3px;font-weight:normal;color:#3a3a3a;letter-spacing:0.000px;white-space:pre;width:39.90px;overflow:hidden;-webkit-text-stroke:0.2px #3a3a3a;">50</div>
<div style="position:absolute;left:701.70px;top:354.00px;height:12px;line-height:12px;font-size:7.3px;font-weight:normal;color:#3a3a3a;letter-spacing:0.000px;white-space:pre;width:40.70px;overflow:hidden;-webkit-text-stroke:0.2px #3a3a3a;">Flat</div>
<div style="position:absolute;left:744.60px;top:354.00px;height:12px;line-height:12px;font-size:7.3px;font-weight:normal;color:#3a3a3a;letter-spacing:0.000px;white-space:pre;width:40.70px;overflow:hidden;-webkit-text-stroke:0.2px #3a3a3a;">Yes</div>
<div style="position:absolute;left:787.10px;top:354.00px;height:12px;line-height:12px;font-size:7.3px;font-weight:normal;color:#3a3a3a;letter-spacing:0.000px;white-space:pre;width:1.70px;overflow:hidden;-webkit-text-stroke:0.2px #3a3a3a;">Y</div>
<div style="position:absolute;left:58.80px;top:363.40px;height:12px;line-height:12px;font-size:7.3px;font-weight:normal;color:#3a3a3a;letter-spacing:0.000px;white-space:pre;width:40.10px;overflow:hidden;-webkit-text-stroke:0.2px #3a3a3a;">100060002</div>
<div style="position:absolute;left:101.70px;top:363.40px;height:12px;line-height:12px;font-size:7.3px;font-weight:normal;color:#3a3a3a;letter-spacing:0.000px;white-space:pre;width:40.10px;overflow:hidden;-webkit-text-stroke:0.2px #3a3a3a;">301</div>
<div style="position:absolute;left:144.00px;top:363.40px;height:12px;line-height:12px;font-size:7.3px;font-weight:normal;color:#3a3a3a;letter-spacing:0.000px;white-space:pre;width:40.70px;overflow:hidden;-webkit-text-stroke:0.2px #3a3a3a;">US</div>
<div style="position:absolute;left:187.70px;top:363.40px;height:12px;line-height:12px;font-size:7.3px;font-weight:normal;color:#3a3a3a;letter-spacing:0.000px;white-space:pre;width:39.90px;overflow:hidden;-webkit-text-stroke:0.2px #3a3a3a;">5</div>
<div style="position:absolute;left:316.40px;top:363.40px;height:12px;line-height:12px;font-size:7.3px;font-weight:normal;color:#3a3a3a;letter-spacing:0.000px;white-space:pre;width:39.90px;overflow:hidden;-webkit-text-stroke:0.2px #3a3a3a;">1</div>
<div style="position:absolute;left:359.30px;top:363.40px;height:12px;line-height:12px;font-size:7.3px;font-weight:normal;color:#3a3a3a;letter-spacing:0.000px;white-space:pre;width:39.90px;overflow:hidden;-webkit-text-stroke:0.2px #3a3a3a;">1</div>
<div style="position:absolute;left:401.40px;top:363.40px;height:12px;line-height:12px;font-size:7.3px;font-weight:normal;color:#3a3a3a;letter-spacing:0.000px;white-space:pre;width:40.70px;overflow:hidden;-webkit-text-stroke:0.2px #3a3a3a;">Case</div>
<div style="position:absolute;left:445.10px;top:363.40px;height:12px;line-height:12px;font-size:7.3px;font-weight:normal;color:#3a3a3a;letter-spacing:0.000px;white-space:pre;width:39.90px;overflow:hidden;-webkit-text-stroke:0.2px #3a3a3a;">50</div>
<div style="position:absolute;left:488.00px;top:363.40px;height:12px;line-height:12px;font-size:7.3px;font-weight:normal;color:#3a3a3a;letter-spacing:0.000px;white-space:pre;width:39.90px;overflow:hidden;-webkit-text-stroke:0.2px #3a3a3a;">50</div>
<div style="position:absolute;left:530.90px;top:363.40px;height:12px;line-height:12px;font-size:7.3px;font-weight:normal;color:#3a3a3a;letter-spacing:0.000px;white-space:pre;width:39.90px;overflow:hidden;-webkit-text-stroke:0.2px #3a3a3a;">50</div>
<div style="position:absolute;left:573.80px;top:363.40px;height:12px;line-height:12px;font-size:7.3px;font-weight:normal;color:#3a3a3a;letter-spacing:0.000px;white-space:pre;width:39.90px;overflow:hidden;-webkit-text-stroke:0.2px #3a3a3a;">50</div>
<div style="position:absolute;left:701.70px;top:363.40px;height:12px;line-height:12px;font-size:7.3px;font-weight:normal;color:#3a3a3a;letter-spacing:0.000px;white-space:pre;width:40.70px;overflow:hidden;-webkit-text-stroke:0.2px #3a3a3a;">Flat</div>
<div style="position:absolute;left:744.60px;top:363.40px;height:12px;line-height:12px;font-size:7.3px;font-weight:normal;color:#3a3a3a;letter-spacing:0.000px;white-space:pre;width:40.70px;overflow:hidden;-webkit-text-stroke:0.2px #3a3a3a;">Yes</div>
<div style="position:absolute;left:787.10px;top:363.40px;height:12px;line-height:12px;font-size:7.3px;font-weight:normal;color:#3a3a3a;letter-spacing:0.000px;white-space:pre;width:1.70px;overflow:hidden;-webkit-text-stroke:0.2px #3a3a3a;">Y</div>
<div style="position:absolute;left:66.00px;top:395.80px;height:12px;line-height:12px;font-size:7.2px;font-weight:normal;color:#444;letter-spacing:0.090px;white-space:pre;-webkit-text-stroke:0.2px #444;">Item_Master</div>
<div style="position:absolute;left:125.00px;top:395.80px;height:12px;line-height:12px;font-size:7.2px;font-weight:normal;color:#444;letter-spacing:0.070px;white-space:pre;-webkit-text-stroke:0.2px #444;">Item_Suppliers</div>
<div style="position:absolute;left:190.00px;top:395.80px;height:12px;line-height:12px;font-size:7.2px;font-weight:bold;color:#1d6b3e;letter-spacing:0.077px;white-space:pre;-webkit-text-stroke:0.15px #1d6b3e;">Item_Supplier_Countries</div>
<div style="position:absolute;left:294.50px;top:395.80px;height:12px;line-height:12px;font-size:7.2px;font-weight:normal;color:#444;letter-spacing:-0.026px;white-space:pre;-webkit-text-stroke:0.2px #444;">Item_Supp_Ctry_Dimensions</div>
<div style="position:absolute;left:409.60px;top:395.80px;height:12px;line-height:12px;font-size:7.2px;font-weight:normal;color:#444;letter-spacing:-0.177px;white-space:pre;-webkit-text-stroke:0.2px #444;">Item_Sup</div>
<div style="position:absolute;left:444.00px;top:395.50px;height:12px;line-height:12px;font-size:7.2px;font-weight:bold;color:#444;letter-spacing:0.499px;white-space:pre;">...</div>
<div style="position:absolute;left:6.00px;top:410.80px;height:12px;line-height:12px;font-size:6.9px;font-weight:normal;color:#444;letter-spacing:-0.389px;white-space:pre;-webkit-text-stroke:0.2px #444;">Ready</div>
<div style="position:absolute;left:46.00px;top:410.80px;height:12px;line-height:12px;font-size:6.9px;font-weight:normal;color:#444;letter-spacing:-0.038px;white-space:pre;-webkit-text-stroke:0.2px #444;">Accessibility: Good to go</div>
<div style="position:absolute;left:780.00px;top:410.80px;height:12px;line-height:12px;font-size:6.9px;font-weight:normal;color:#444;letter-spacing:-0.600px;white-space:pre;-webkit-text-stroke:0.2px #444;">85%</div>
</body></html>
